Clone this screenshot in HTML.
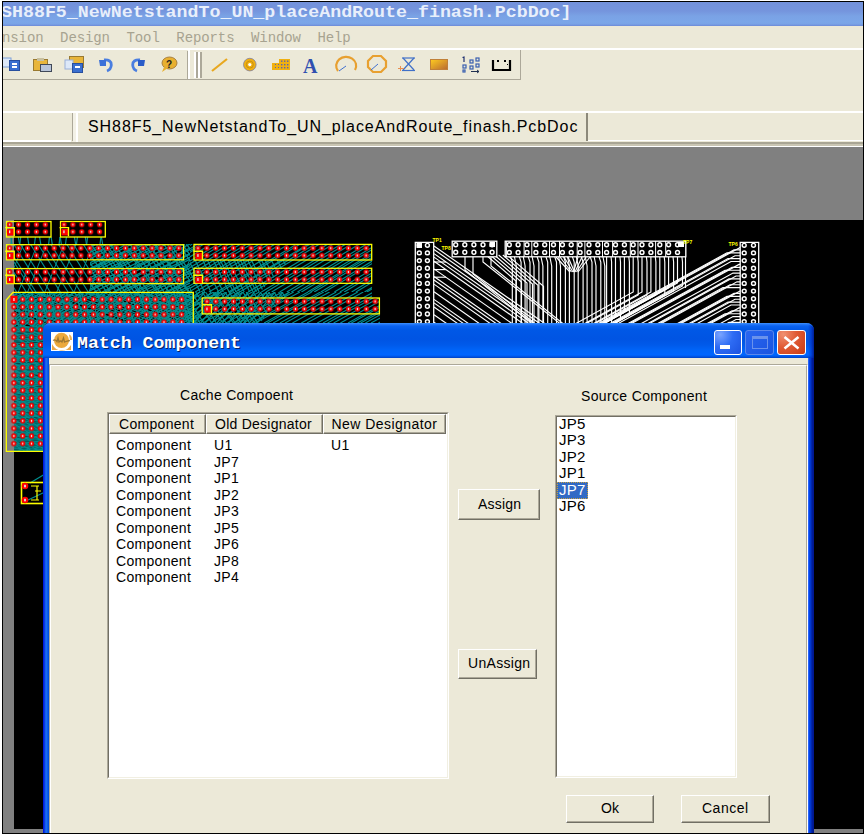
<!DOCTYPE html>
<html><head><meta charset="utf-8">
<style>
*{margin:0;padding:0;box-sizing:border-box}
html,body{width:864px;height:835px;overflow:hidden;background:#ece9d8;font-family:"Liberation Sans",sans-serif;position:relative}
.a{position:absolute}
.txt{position:absolute;font-family:"Liberation Sans",sans-serif;font-size:14px;color:#000;white-space:pre;line-height:16px}
.btn{position:absolute;background:#ece9d8;border:1px solid;border-color:#fff #716f64 #716f64 #fff;box-shadow:inset -1px -1px 0 #aca899}
</style></head><body>
<!-- main title bar -->
<div class="a" style="left:0;top:2px;width:864px;height:24px;background:linear-gradient(#7391db 0px,#7595dd 9px,#7aa2e5 14px,#7ba6e8 20px,#7aa3e6 22px,#6c8ad7 24px)"></div>
<div class="a" style="left:1px;top:3px;font-family:'Liberation Mono',monospace;font-weight:bold;font-size:17px;letter-spacing:0;transform:scaleX(1.0755);transform-origin:0 0;color:#e8effb;white-space:pre;line-height:20px">SH88F5_NewNetstandTo_UN_placeAndRoute_finash.PcbDoc]</div>
<!-- menu -->
<div class="a" style="left:2px;top:30px;font-family:'Liberation Mono',monospace;font-size:14px;letter-spacing:-0.1px;color:#a7a390;white-space:pre;line-height:16px">nsion  Design  Tool  Reports  Window  Help</div>
<div class="a" style="left:0;top:48px;width:864px;height:2px;background:#fff"></div>
<!-- toolbars -->
<div class="a" style="left:0;top:79px;width:521px;height:1px;background:#aca899"></div>
<div class="a" style="left:520px;top:50px;width:1px;height:30px;background:#aca899"></div>
<div class="a" style="left:187px;top:51px;width:1px;height:28px;background:#aca899"></div>
<div class="a" style="left:188px;top:50px;width:2px;height:29px;background:#fff"></div>
<div class="a" style="left:194px;top:52px;width:2px;height:26px;background:#fff"></div><div class="a" style="left:196px;top:52px;width:2px;height:26px;background:#aca899"></div><div class="a" style="left:198px;top:52px;width:2px;height:26px;background:#fff"></div><div class="a" style="left:200px;top:52px;width:2px;height:26px;background:#aca899"></div>

<svg class="a" style="left:0;top:50px" width="530" height="30" viewBox="0 50 530 30">
 <!-- copy -->
 <rect x="2" y="58" width="9" height="9" fill="#dde8f8" stroke="#7da0d8" stroke-width="1"/>
 <rect x="9.5" y="60.5" width="10" height="10" fill="#3a6fd0" stroke="#284f9e"/>
 <rect x="12" y="63" width="5" height="2" fill="#fff"/><rect x="12" y="66" width="5" height="2" fill="#fff"/>
 <!-- paste -->
 <rect x="33.5" y="59.5" width="14" height="11" fill="#e8b53a" stroke="#9a7a30"/>
 <rect x="37" y="58" width="7" height="3" fill="#c8c0a0"/>
 <rect x="40.5" y="64.5" width="11" height="7" fill="#b8c4d8" stroke="#404858"/>
 <!-- paste special -->
 <rect x="69.5" y="56.5" width="14" height="11" fill="#e8b53a" stroke="#9a7a30"/>
 <rect x="65" y="60" width="8" height="9" fill="#dde8f8" stroke="#9ab0d8" stroke-width="1"/>
 <rect x="72.5" y="63.5" width="10" height="9" fill="#3a6fd0" stroke="#284f9e"/>
 <rect x="75" y="66" width="5" height="2" fill="#fff"/>
 <!-- undo -->
 <path d="M104 60 Q111.5 59.5 111.3 65 Q111 69.5 107 71" fill="none" stroke="#4a7ee0" stroke-width="2.8"/>
 <path d="M99 60 L106 60 L106 66 L100 66 Z" fill="#3a70d8"/>
 <!-- redo -->
 <path d="M140 60 Q132.5 59.5 132.7 65 Q133 69.5 137 71" fill="none" stroke="#4a7ee0" stroke-width="2.8"/>
 <path d="M145 60 L138 60 L138 66 L144 66 Z" fill="#2a5cc8"/>
 <!-- help -->
 <ellipse cx="169.5" cy="63" rx="7.5" ry="6" fill="#e8b030" stroke="#a88040"/>
 <path d="M164 67 L162 72 L168 68 Z" fill="#e8b030"/>
 <text x="166" y="67.5" font-family="Liberation Sans" font-weight="bold" font-size="10" fill="#202020">?</text>
 <!-- line -->
 <line x1="212" y1="71" x2="227" y2="59" stroke="#e8a820" stroke-width="2.2"/>
 <!-- pad -->
 <circle cx="249.8" cy="64.6" r="6.3" fill="#f0b010" stroke="#8080a0" stroke-width="0.8"/>
 <circle cx="249.8" cy="64.6" r="3.5" fill="none" stroke="#c89010" stroke-width="1"/>
 <circle cx="249.8" cy="64.6" r="1.6" fill="#fff"/>
 <!-- array -->
 <rect x="272" y="63" width="18" height="7" fill="#f0b010"/>
 <rect x="279" y="59" width="11" height="4" fill="#f0b010"/>
 <g fill="#5a64b0"><rect x="275" y="64" width="1" height="1"/><rect x="278" y="64" width="1" height="1"/><rect x="281" y="64" width="1.4" height="1.4"/><rect x="284" y="64" width="1.4" height="1.4"/><rect x="287" y="64" width="1.4" height="1.4"/>
 <rect x="275" y="67" width="1" height="1"/><rect x="278" y="67" width="1" height="1"/><rect x="281" y="67" width="1.4" height="1.4"/><rect x="284" y="67" width="1.4" height="1.4"/><rect x="287" y="67" width="1.4" height="1.4"/>
 <rect x="281" y="60.5" width="1.4" height="1.4"/><rect x="284" y="60.5" width="1.4" height="1.4"/><rect x="287" y="60.5" width="1.4" height="1.4"/></g>
 <!-- A -->
 <text x="303" y="73" font-family="Liberation Serif" font-weight="bold" font-size="20" fill="#3050b0">A</text>
 <!-- arc -->
 <path d="M338 71 A10 9 0 1 1 355 70" fill="none" stroke="#e8a030" stroke-width="2.2"/>
 <line x1="339" y1="71" x2="346" y2="66" stroke="#4070d0" stroke-width="1"/>
 <!-- circle -->
 <path d="M373 56 L381 56 L386 61 L386 67 L381 72 L373 72 L368 67 L368 61 Z" fill="none" stroke="#e8a030" stroke-width="2.2"/>
 <line x1="371" y1="70" x2="378" y2="64" stroke="#4070d0" stroke-width="1"/>
 <!-- hourglass -->
 <g stroke="#4070c8" stroke-width="1.2" fill="none"><line x1="402" y1="58" x2="415" y2="58"/><line x1="402" y1="70.5" x2="415" y2="70.5"/><line x1="403" y1="58" x2="414" y2="70"/><line x1="414" y1="58" x2="403" y2="70"/></g>
 <g stroke="#e89050" stroke-width="1"><line x1="398" y1="68.5" x2="404" y2="68.5"/><line x1="400.5" y1="66" x2="400.5" y2="71"/></g>
 <!-- rect -->
 <defs><linearGradient id="og" x1="0" y1="0" x2="1" y2="1"><stop offset="0" stop-color="#ffcc20"/><stop offset="1" stop-color="#b86a30"/></linearGradient></defs>
 <rect x="430.5" y="59.5" width="17" height="10" fill="url(#og)" stroke="#c08038"/>
 <!-- array2 -->
 <g fill="none" stroke="#3a5fb0" stroke-width="1.2"><rect x="470" y="60" width="3" height="3"/><rect x="476" y="58" width="3" height="3"/><rect x="476" y="64" width="3" height="3"/><rect x="463" y="65" width="3" height="3"/><rect x="470" y="66" width="3" height="3"/><rect x="463" y="70" width="2" height="2"/></g>
 <path d="M462.5 57.5 L464 57 L464 62" stroke="#203070" stroke-width="1.2" fill="none"/>
 <path d="M471 71.5 L479 71.5 M477 70 L479 71.5 L477 73" stroke="#203050" stroke-width="1" fill="none"/>
 <!-- bracket -->
 <path d="M493 60 L493 70 L510 70 L510 60" fill="none" stroke="#000" stroke-width="2.2"/>
 <rect x="497" y="60" width="2" height="2" fill="#000"/><rect x="504" y="60" width="2" height="2" fill="#000"/><rect x="507" y="64" width="1" height="1" fill="#000"/>
</svg>
<!-- tab row -->
<div class="a" style="left:0;top:111px;width:864px;height:2px;background:#fff"></div>
<div class="a" style="left:0;top:140px;width:71px;height:2px;background:#fff"></div>
<div class="a" style="left:72px;top:113px;width:1px;height:28px;background:#aca899"></div>
<div class="a" style="left:73px;top:113px;width:3px;height:29px;background:#f3f1e6"></div><div class="a" style="left:76px;top:113px;width:2px;height:29px;background:#fff"></div>
<div class="a" style="left:586px;top:113px;width:2px;height:28px;background:#8c897a"></div>
<div class="a" style="left:588px;top:140px;width:276px;height:1px;background:#fff"></div>
<div class="txt" style="left:88px;top:118px;font-size:16px;line-height:18px;letter-spacing:0.93px">SH88F5_NewNetstandTo_UN_placeAndRoute_finash.PcbDoc</div>
<div class="a" style="left:0;top:142px;width:864px;height:4px;background:linear-gradient(#a9a594 0,#a9a594 2px,#c9c5b3 2px)"></div>
<div class="a" style="left:0;top:146px;width:864px;height:1px;background:#fff"></div>
<!-- gray work area -->
<div class="a" style="left:0;top:147px;width:864px;height:688px;background:#808080"></div>
<div class="a" style="left:14px;top:220px;width:850px;height:609px;background:#000"></div>

<svg class="a" style="left:0;top:0" width="864" height="835" viewBox="0 0 864 835">
<defs></defs>
<clipPath id="t1"><polygon points="8,237 110,237 110,245 8,245"/></clipPath>
<g clip-path="url(#t1)" stroke="#009090" stroke-width="1.2" fill="none" opacity="1">
<line x1="2.5" y1="245.0" x2="1.1" y2="237.0"/>
<line x1="12.1" y1="245.0" x2="10.8" y2="237.0"/>
<line x1="19.7" y1="245.0" x2="18.3" y2="237.0"/>
<line x1="28.9" y1="245.0" x2="27.6" y2="237.0"/>
<line x1="40.9" y1="245.0" x2="39.6" y2="237.0"/>
<line x1="52.4" y1="245.0" x2="51.1" y2="237.0"/>
<line x1="61.5" y1="245.0" x2="60.2" y2="237.0"/>
<line x1="75.8" y1="245.0" x2="74.4" y2="237.0"/>
<line x1="86.6" y1="245.0" x2="85.3" y2="237.0"/>
<line x1="102.8" y1="245.0" x2="101.4" y2="237.0"/>
<line x1="115.0" y1="245.0" x2="113.6" y2="237.0"/>
<line x1="3.1" y1="245.0" x2="4.1" y2="237.0"/>
<line x1="10.9" y1="245.0" x2="11.9" y2="237.0"/>
<line x1="19.7" y1="245.0" x2="20.7" y2="237.0"/>
<line x1="34.4" y1="245.0" x2="35.4" y2="237.0"/>
<line x1="48.5" y1="245.0" x2="49.5" y2="237.0"/>
<line x1="59.0" y1="245.0" x2="60.0" y2="237.0"/>
<line x1="65.4" y1="245.0" x2="66.4" y2="237.0"/>
<line x1="76.4" y1="245.0" x2="77.4" y2="237.0"/>
<line x1="86.6" y1="245.0" x2="87.6" y2="237.0"/>
<line x1="99.9" y1="245.0" x2="100.9" y2="237.0"/>
<line x1="111.0" y1="245.0" x2="112.0" y2="237.0"/>
</g>
<clipPath id="t2"><polygon points="14,244 90,244 90,292 14,292"/></clipPath>
<g clip-path="url(#t2)" stroke="#009090" stroke-width="1.1" fill="none" opacity="1">
<line x1="8.2" y1="292.0" x2="-21.8" y2="244.0"/>
<line x1="16.5" y1="292.0" x2="-13.5" y2="244.0"/>
<line x1="26.2" y1="292.0" x2="-3.8" y2="244.0"/>
<line x1="32.8" y1="292.0" x2="2.8" y2="244.0"/>
<line x1="35.9" y1="292.0" x2="5.9" y2="244.0"/>
<line x1="43.6" y1="292.0" x2="13.6" y2="244.0"/>
<line x1="50.2" y1="292.0" x2="20.2" y2="244.0"/>
<line x1="60.3" y1="292.0" x2="30.3" y2="244.0"/>
<line x1="68.0" y1="292.0" x2="38.0" y2="244.0"/>
<line x1="73.5" y1="292.0" x2="43.5" y2="244.0"/>
<line x1="80.6" y1="292.0" x2="50.6" y2="244.0"/>
<line x1="88.2" y1="292.0" x2="58.2" y2="244.0"/>
<line x1="96.6" y1="292.0" x2="66.6" y2="244.0"/>
<line x1="103.3" y1="292.0" x2="73.3" y2="244.0"/>
<line x1="113.1" y1="292.0" x2="83.1" y2="244.0"/>
<line x1="123.4" y1="292.0" x2="93.4" y2="244.0"/>
</g>
<clipPath id="t2c"><polygon points="14,244 190,244 190,292 14,292"/></clipPath>
<g clip-path="url(#t2c)" stroke="#009090" stroke-width="1" fill="none" opacity="1">
<line x1="-10.5" y1="292.0" x2="8.7" y2="244.0"/>
<line x1="4.3" y1="292.0" x2="23.5" y2="244.0"/>
<line x1="18.3" y1="292.0" x2="37.5" y2="244.0"/>
<line x1="27.6" y1="292.0" x2="46.8" y2="244.0"/>
<line x1="44.9" y1="292.0" x2="64.1" y2="244.0"/>
<line x1="56.8" y1="292.0" x2="76.0" y2="244.0"/>
<line x1="74.1" y1="292.0" x2="93.3" y2="244.0"/>
<line x1="88.9" y1="292.0" x2="108.1" y2="244.0"/>
<line x1="108.0" y1="292.0" x2="127.2" y2="244.0"/>
<line x1="124.4" y1="292.0" x2="143.6" y2="244.0"/>
<line x1="137.7" y1="292.0" x2="156.9" y2="244.0"/>
<line x1="157.8" y1="292.0" x2="177.0" y2="244.0"/>
<line x1="165.6" y1="292.0" x2="184.8" y2="244.0"/>
<line x1="176.8" y1="292.0" x2="196.0" y2="244.0"/>
<line x1="191.7" y1="292.0" x2="210.9" y2="244.0"/>
</g>
<clipPath id="t2d"><polygon points="90,244 190,244 190,292 90,292"/></clipPath>
<g clip-path="url(#t2d)" stroke="#009090" stroke-width="1.3" fill="none" opacity="1">
<line x1="83.5" y1="292.0" x2="49.2" y2="244.0"/>
<line x1="89.3" y1="292.0" x2="55.0" y2="244.0"/>
<line x1="96.3" y1="292.0" x2="62.0" y2="244.0"/>
<line x1="100.7" y1="292.0" x2="66.5" y2="244.0"/>
<line x1="106.7" y1="292.0" x2="72.4" y2="244.0"/>
<line x1="110.6" y1="292.0" x2="76.3" y2="244.0"/>
<line x1="116.6" y1="292.0" x2="82.3" y2="244.0"/>
<line x1="121.4" y1="292.0" x2="87.1" y2="244.0"/>
<line x1="125.1" y1="292.0" x2="90.8" y2="244.0"/>
<line x1="130.5" y1="292.0" x2="96.2" y2="244.0"/>
<line x1="134.2" y1="292.0" x2="99.9" y2="244.0"/>
<line x1="138.3" y1="292.0" x2="104.0" y2="244.0"/>
<line x1="140.5" y1="292.0" x2="106.2" y2="244.0"/>
<line x1="144.4" y1="292.0" x2="110.1" y2="244.0"/>
<line x1="148.6" y1="292.0" x2="114.3" y2="244.0"/>
<line x1="156.9" y1="292.0" x2="122.6" y2="244.0"/>
<line x1="159.4" y1="292.0" x2="125.1" y2="244.0"/>
<line x1="164.1" y1="292.0" x2="129.8" y2="244.0"/>
<line x1="169.0" y1="292.0" x2="134.8" y2="244.0"/>
<line x1="174.9" y1="292.0" x2="140.6" y2="244.0"/>
<line x1="178.7" y1="292.0" x2="144.4" y2="244.0"/>
<line x1="182.8" y1="292.0" x2="148.6" y2="244.0"/>
<line x1="188.4" y1="292.0" x2="154.1" y2="244.0"/>
<line x1="189.6" y1="292.0" x2="155.3" y2="244.0"/>
<line x1="197.9" y1="292.0" x2="163.6" y2="244.0"/>
<line x1="201.5" y1="292.0" x2="167.3" y2="244.0"/>
<line x1="204.6" y1="292.0" x2="170.3" y2="244.0"/>
<line x1="212.5" y1="292.0" x2="178.2" y2="244.0"/>
<line x1="216.5" y1="292.0" x2="182.2" y2="244.0"/>
<line x1="220.7" y1="292.0" x2="186.4" y2="244.0"/>
<line x1="227.9" y1="292.0" x2="193.6" y2="244.0"/>
<line x1="-11.5" y1="292.0" x2="84.5" y2="244.0"/>
<line x1="-6.2" y1="292.0" x2="89.8" y2="244.0"/>
<line x1="0.9" y1="292.0" x2="96.9" y2="244.0"/>
<line x1="7.0" y1="292.0" x2="103.0" y2="244.0"/>
<line x1="11.2" y1="292.0" x2="107.2" y2="244.0"/>
<line x1="16.7" y1="292.0" x2="112.7" y2="244.0"/>
<line x1="18.8" y1="292.0" x2="114.8" y2="244.0"/>
<line x1="23.6" y1="292.0" x2="119.6" y2="244.0"/>
<line x1="31.5" y1="292.0" x2="127.5" y2="244.0"/>
<line x1="36.2" y1="292.0" x2="132.2" y2="244.0"/>
<line x1="43.2" y1="292.0" x2="139.2" y2="244.0"/>
<line x1="45.5" y1="292.0" x2="141.5" y2="244.0"/>
<line x1="49.3" y1="292.0" x2="145.3" y2="244.0"/>
<line x1="54.4" y1="292.0" x2="150.4" y2="244.0"/>
<line x1="61.6" y1="292.0" x2="157.6" y2="244.0"/>
<line x1="66.0" y1="292.0" x2="162.0" y2="244.0"/>
<line x1="70.5" y1="292.0" x2="166.5" y2="244.0"/>
<line x1="78.6" y1="292.0" x2="174.6" y2="244.0"/>
<line x1="84.3" y1="292.0" x2="180.3" y2="244.0"/>
<line x1="87.5" y1="292.0" x2="183.5" y2="244.0"/>
<line x1="94.1" y1="292.0" x2="190.1" y2="244.0"/>
<line x1="102.2" y1="292.0" x2="198.2" y2="244.0"/>
<line x1="105.1" y1="292.0" x2="201.1" y2="244.0"/>
<line x1="112.8" y1="292.0" x2="208.8" y2="244.0"/>
<line x1="114.7" y1="292.0" x2="210.7" y2="244.0"/>
<line x1="120.6" y1="292.0" x2="216.6" y2="244.0"/>
<line x1="124.6" y1="292.0" x2="220.6" y2="244.0"/>
<line x1="133.4" y1="292.0" x2="229.4" y2="244.0"/>
<line x1="137.1" y1="292.0" x2="233.1" y2="244.0"/>
<line x1="141.7" y1="292.0" x2="237.7" y2="244.0"/>
<line x1="147.3" y1="292.0" x2="243.3" y2="244.0"/>
<line x1="151.5" y1="292.0" x2="247.5" y2="244.0"/>
<line x1="158.0" y1="292.0" x2="254.0" y2="244.0"/>
<line x1="165.6" y1="292.0" x2="261.6" y2="244.0"/>
<line x1="167.8" y1="292.0" x2="263.8" y2="244.0"/>
<line x1="171.9" y1="292.0" x2="267.9" y2="244.0"/>
<line x1="177.3" y1="292.0" x2="273.3" y2="244.0"/>
<line x1="181.6" y1="292.0" x2="277.6" y2="244.0"/>
<line x1="188.9" y1="292.0" x2="284.9" y2="244.0"/>
<line x1="194.4" y1="292.0" x2="290.4" y2="244.0"/>
</g>
<clipPath id="t2b"><polygon points="190,244 372,244 372,292 190,292"/></clipPath>
<g clip-path="url(#t2b)" stroke="#009090" stroke-width="1.15" fill="none" opacity="1">
<line x1="104.8" y1="292.0" x2="184.8" y2="244.0"/>
<line x1="112.3" y1="292.0" x2="192.3" y2="244.0"/>
<line x1="118.0" y1="292.0" x2="198.0" y2="244.0"/>
<line x1="121.2" y1="292.0" x2="201.2" y2="244.0"/>
<line x1="124.0" y1="292.0" x2="204.0" y2="244.0"/>
<line x1="131.3" y1="292.0" x2="211.3" y2="244.0"/>
<line x1="138.3" y1="292.0" x2="218.3" y2="244.0"/>
<line x1="142.9" y1="292.0" x2="222.9" y2="244.0"/>
<line x1="149.2" y1="292.0" x2="229.2" y2="244.0"/>
<line x1="154.6" y1="292.0" x2="234.6" y2="244.0"/>
<line x1="160.8" y1="292.0" x2="240.8" y2="244.0"/>
<line x1="166.8" y1="292.0" x2="246.8" y2="244.0"/>
<line x1="171.7" y1="292.0" x2="251.7" y2="244.0"/>
<line x1="179.4" y1="292.0" x2="259.4" y2="244.0"/>
<line x1="183.8" y1="292.0" x2="263.8" y2="244.0"/>
<line x1="189.0" y1="292.0" x2="269.0" y2="244.0"/>
<line x1="195.2" y1="292.0" x2="275.2" y2="244.0"/>
<line x1="200.9" y1="292.0" x2="280.9" y2="244.0"/>
<line x1="209.0" y1="292.0" x2="289.0" y2="244.0"/>
<line x1="216.9" y1="292.0" x2="296.9" y2="244.0"/>
<line x1="220.2" y1="292.0" x2="300.2" y2="244.0"/>
<line x1="228.5" y1="292.0" x2="308.5" y2="244.0"/>
<line x1="230.2" y1="292.0" x2="310.2" y2="244.0"/>
<line x1="235.3" y1="292.0" x2="315.3" y2="244.0"/>
<line x1="239.7" y1="292.0" x2="319.7" y2="244.0"/>
<line x1="248.1" y1="292.0" x2="328.1" y2="244.0"/>
<line x1="253.4" y1="292.0" x2="333.4" y2="244.0"/>
<line x1="261.4" y1="292.0" x2="341.4" y2="244.0"/>
<line x1="266.0" y1="292.0" x2="346.0" y2="244.0"/>
<line x1="271.6" y1="292.0" x2="351.6" y2="244.0"/>
<line x1="279.6" y1="292.0" x2="359.6" y2="244.0"/>
<line x1="286.8" y1="292.0" x2="366.8" y2="244.0"/>
<line x1="291.3" y1="292.0" x2="371.3" y2="244.0"/>
<line x1="297.5" y1="292.0" x2="377.5" y2="244.0"/>
<line x1="301.4" y1="292.0" x2="381.4" y2="244.0"/>
<line x1="307.7" y1="292.0" x2="387.7" y2="244.0"/>
<line x1="310.5" y1="292.0" x2="390.5" y2="244.0"/>
<line x1="314.2" y1="292.0" x2="394.2" y2="244.0"/>
<line x1="320.8" y1="292.0" x2="400.8" y2="244.0"/>
<line x1="324.6" y1="292.0" x2="404.6" y2="244.0"/>
<line x1="334.4" y1="292.0" x2="414.4" y2="244.0"/>
<line x1="340.0" y1="292.0" x2="420.0" y2="244.0"/>
<line x1="344.2" y1="292.0" x2="424.2" y2="244.0"/>
<line x1="351.6" y1="292.0" x2="431.6" y2="244.0"/>
<line x1="356.0" y1="292.0" x2="436.0" y2="244.0"/>
<line x1="364.5" y1="292.0" x2="444.5" y2="244.0"/>
<line x1="366.9" y1="292.0" x2="446.9" y2="244.0"/>
<line x1="375.5" y1="292.0" x2="455.5" y2="244.0"/>
</g>
<clipPath id="t2e"><polygon points="190,260 290,260 260,292 190,292"/></clipPath>
<g clip-path="url(#t2e)" stroke="#009090" stroke-width="1.2" fill="none" opacity="1">
<line x1="183.8" y1="292.0" x2="167.8" y2="260.0"/>
<line x1="188.8" y1="292.0" x2="172.8" y2="260.0"/>
<line x1="191.6" y1="292.0" x2="175.6" y2="260.0"/>
<line x1="200.1" y1="292.0" x2="184.1" y2="260.0"/>
<line x1="204.6" y1="292.0" x2="188.6" y2="260.0"/>
<line x1="211.0" y1="292.0" x2="195.0" y2="260.0"/>
<line x1="218.6" y1="292.0" x2="202.6" y2="260.0"/>
<line x1="223.3" y1="292.0" x2="207.3" y2="260.0"/>
<line x1="229.1" y1="292.0" x2="213.1" y2="260.0"/>
<line x1="233.4" y1="292.0" x2="217.4" y2="260.0"/>
<line x1="236.1" y1="292.0" x2="220.1" y2="260.0"/>
<line x1="239.6" y1="292.0" x2="223.6" y2="260.0"/>
<line x1="244.2" y1="292.0" x2="228.2" y2="260.0"/>
<line x1="249.8" y1="292.0" x2="233.8" y2="260.0"/>
<line x1="253.1" y1="292.0" x2="237.1" y2="260.0"/>
<line x1="256.4" y1="292.0" x2="240.4" y2="260.0"/>
<line x1="259.2" y1="292.0" x2="243.2" y2="260.0"/>
<line x1="263.7" y1="292.0" x2="247.7" y2="260.0"/>
<line x1="267.3" y1="292.0" x2="251.3" y2="260.0"/>
<line x1="274.4" y1="292.0" x2="258.4" y2="260.0"/>
<line x1="277.5" y1="292.0" x2="261.5" y2="260.0"/>
<line x1="281.2" y1="292.0" x2="265.2" y2="260.0"/>
<line x1="287.3" y1="292.0" x2="271.3" y2="260.0"/>
<line x1="293.2" y1="292.0" x2="277.2" y2="260.0"/>
<line x1="299.1" y1="292.0" x2="283.1" y2="260.0"/>
<line x1="306.5" y1="292.0" x2="290.5" y2="260.0"/>
</g>
<clipPath id="t3"><polygon points="14,292 194,292 194,326 14,326"/></clipPath>
<g clip-path="url(#t3)" stroke="#009090" stroke-width="1.2" fill="none" opacity="1">
<line x1="8.7" y1="326.0" x2="-88.4" y2="292.0"/>
<line x1="12.1" y1="326.0" x2="-85.1" y2="292.0"/>
<line x1="15.6" y1="326.0" x2="-81.5" y2="292.0"/>
<line x1="22.1" y1="326.0" x2="-75.0" y2="292.0"/>
<line x1="25.3" y1="326.0" x2="-71.9" y2="292.0"/>
<line x1="34.0" y1="326.0" x2="-63.1" y2="292.0"/>
<line x1="37.9" y1="326.0" x2="-59.2" y2="292.0"/>
<line x1="41.9" y1="326.0" x2="-55.2" y2="292.0"/>
<line x1="46.4" y1="326.0" x2="-50.8" y2="292.0"/>
<line x1="51.5" y1="326.0" x2="-45.7" y2="292.0"/>
<line x1="60.4" y1="326.0" x2="-36.7" y2="292.0"/>
<line x1="63.4" y1="326.0" x2="-33.7" y2="292.0"/>
<line x1="70.5" y1="326.0" x2="-26.7" y2="292.0"/>
<line x1="74.0" y1="326.0" x2="-23.2" y2="292.0"/>
<line x1="79.9" y1="326.0" x2="-17.2" y2="292.0"/>
<line x1="84.1" y1="326.0" x2="-13.0" y2="292.0"/>
<line x1="88.6" y1="326.0" x2="-8.6" y2="292.0"/>
<line x1="92.9" y1="326.0" x2="-4.3" y2="292.0"/>
<line x1="97.3" y1="326.0" x2="0.2" y2="292.0"/>
<line x1="101.2" y1="326.0" x2="4.1" y2="292.0"/>
<line x1="106.0" y1="326.0" x2="8.8" y2="292.0"/>
<line x1="111.6" y1="326.0" x2="14.4" y2="292.0"/>
<line x1="117.1" y1="326.0" x2="20.0" y2="292.0"/>
<line x1="122.7" y1="326.0" x2="25.5" y2="292.0"/>
<line x1="128.7" y1="326.0" x2="31.6" y2="292.0"/>
<line x1="131.6" y1="326.0" x2="34.4" y2="292.0"/>
<line x1="135.1" y1="326.0" x2="37.9" y2="292.0"/>
<line x1="144.0" y1="326.0" x2="46.8" y2="292.0"/>
<line x1="149.0" y1="326.0" x2="51.9" y2="292.0"/>
<line x1="153.5" y1="326.0" x2="56.3" y2="292.0"/>
<line x1="159.7" y1="326.0" x2="62.5" y2="292.0"/>
<line x1="166.9" y1="326.0" x2="69.8" y2="292.0"/>
<line x1="172.6" y1="326.0" x2="75.4" y2="292.0"/>
<line x1="179.4" y1="326.0" x2="82.3" y2="292.0"/>
<line x1="183.8" y1="326.0" x2="86.7" y2="292.0"/>
<line x1="186.7" y1="326.0" x2="89.5" y2="292.0"/>
<line x1="191.0" y1="326.0" x2="93.9" y2="292.0"/>
<line x1="198.7" y1="326.0" x2="101.6" y2="292.0"/>
<line x1="204.4" y1="326.0" x2="107.3" y2="292.0"/>
<line x1="209.8" y1="326.0" x2="112.6" y2="292.0"/>
<line x1="213.7" y1="326.0" x2="116.6" y2="292.0"/>
<line x1="218.8" y1="326.0" x2="121.7" y2="292.0"/>
<line x1="224.4" y1="326.0" x2="127.3" y2="292.0"/>
<line x1="227.9" y1="326.0" x2="130.8" y2="292.0"/>
<line x1="229.9" y1="326.0" x2="132.8" y2="292.0"/>
<line x1="236.0" y1="326.0" x2="138.8" y2="292.0"/>
<line x1="239.8" y1="326.0" x2="142.7" y2="292.0"/>
<line x1="246.0" y1="326.0" x2="148.8" y2="292.0"/>
<line x1="250.5" y1="326.0" x2="153.3" y2="292.0"/>
<line x1="257.1" y1="326.0" x2="159.9" y2="292.0"/>
<line x1="262.2" y1="326.0" x2="165.0" y2="292.0"/>
<line x1="264.0" y1="326.0" x2="166.8" y2="292.0"/>
<line x1="269.8" y1="326.0" x2="172.6" y2="292.0"/>
<line x1="273.5" y1="326.0" x2="176.3" y2="292.0"/>
<line x1="275.0" y1="326.0" x2="177.9" y2="292.0"/>
<line x1="280.9" y1="326.0" x2="183.8" y2="292.0"/>
<line x1="286.7" y1="326.0" x2="189.5" y2="292.0"/>
<line x1="290.4" y1="326.0" x2="193.2" y2="292.0"/>
<line x1="295.1" y1="326.0" x2="197.9" y2="292.0"/>
<line x1="-32.3" y1="326.0" x2="10.2" y2="292.0"/>
<line x1="-28.3" y1="326.0" x2="14.2" y2="292.0"/>
<line x1="-24.4" y1="326.0" x2="18.1" y2="292.0"/>
<line x1="-17.2" y1="326.0" x2="25.3" y2="292.0"/>
<line x1="-11.4" y1="326.0" x2="31.1" y2="292.0"/>
<line x1="-8.0" y1="326.0" x2="34.5" y2="292.0"/>
<line x1="-1.3" y1="326.0" x2="41.2" y2="292.0"/>
<line x1="3.9" y1="326.0" x2="46.4" y2="292.0"/>
<line x1="11.4" y1="326.0" x2="53.9" y2="292.0"/>
<line x1="14.5" y1="326.0" x2="57.0" y2="292.0"/>
<line x1="19.8" y1="326.0" x2="62.3" y2="292.0"/>
<line x1="23.6" y1="326.0" x2="66.1" y2="292.0"/>
<line x1="31.0" y1="326.0" x2="73.5" y2="292.0"/>
<line x1="32.6" y1="326.0" x2="75.1" y2="292.0"/>
<line x1="38.9" y1="326.0" x2="81.4" y2="292.0"/>
<line x1="42.2" y1="326.0" x2="84.7" y2="292.0"/>
<line x1="47.1" y1="326.0" x2="89.6" y2="292.0"/>
<line x1="52.5" y1="326.0" x2="95.0" y2="292.0"/>
<line x1="61.0" y1="326.0" x2="103.5" y2="292.0"/>
<line x1="64.8" y1="326.0" x2="107.3" y2="292.0"/>
<line x1="70.5" y1="326.0" x2="113.0" y2="292.0"/>
<line x1="73.1" y1="326.0" x2="115.6" y2="292.0"/>
<line x1="79.6" y1="326.0" x2="122.1" y2="292.0"/>
<line x1="83.0" y1="326.0" x2="125.5" y2="292.0"/>
<line x1="87.5" y1="326.0" x2="130.0" y2="292.0"/>
<line x1="90.1" y1="326.0" x2="132.6" y2="292.0"/>
<line x1="97.0" y1="326.0" x2="139.5" y2="292.0"/>
<line x1="103.7" y1="326.0" x2="146.2" y2="292.0"/>
<line x1="108.5" y1="326.0" x2="151.0" y2="292.0"/>
<line x1="111.9" y1="326.0" x2="154.4" y2="292.0"/>
<line x1="120.2" y1="326.0" x2="162.7" y2="292.0"/>
<line x1="125.7" y1="326.0" x2="168.2" y2="292.0"/>
<line x1="133.3" y1="326.0" x2="175.8" y2="292.0"/>
<line x1="137.8" y1="326.0" x2="180.3" y2="292.0"/>
<line x1="141.1" y1="326.0" x2="183.6" y2="292.0"/>
<line x1="145.9" y1="326.0" x2="188.4" y2="292.0"/>
<line x1="150.1" y1="326.0" x2="192.6" y2="292.0"/>
<line x1="155.2" y1="326.0" x2="197.7" y2="292.0"/>
<line x1="157.4" y1="326.0" x2="199.9" y2="292.0"/>
<line x1="161.2" y1="326.0" x2="203.7" y2="292.0"/>
<line x1="169.2" y1="326.0" x2="211.7" y2="292.0"/>
<line x1="172.3" y1="326.0" x2="214.8" y2="292.0"/>
<line x1="176.2" y1="326.0" x2="218.7" y2="292.0"/>
<line x1="179.6" y1="326.0" x2="222.1" y2="292.0"/>
<line x1="183.4" y1="326.0" x2="225.9" y2="292.0"/>
<line x1="190.9" y1="326.0" x2="233.4" y2="292.0"/>
<line x1="196.0" y1="326.0" x2="238.5" y2="292.0"/>
<line x1="8.8" y1="326.0" x2="-2.5" y2="292.0"/>
<line x1="11.6" y1="326.0" x2="0.3" y2="292.0"/>
<line x1="15.4" y1="326.0" x2="4.1" y2="292.0"/>
<line x1="18.5" y1="326.0" x2="7.2" y2="292.0"/>
<line x1="23.5" y1="326.0" x2="12.2" y2="292.0"/>
<line x1="30.6" y1="326.0" x2="19.3" y2="292.0"/>
<line x1="34.3" y1="326.0" x2="22.9" y2="292.0"/>
<line x1="39.2" y1="326.0" x2="27.9" y2="292.0"/>
<line x1="42.7" y1="326.0" x2="31.3" y2="292.0"/>
<line x1="49.5" y1="326.0" x2="38.1" y2="292.0"/>
<line x1="51.6" y1="326.0" x2="40.3" y2="292.0"/>
<line x1="58.2" y1="326.0" x2="46.9" y2="292.0"/>
<line x1="60.3" y1="326.0" x2="48.9" y2="292.0"/>
<line x1="64.7" y1="326.0" x2="53.3" y2="292.0"/>
<line x1="71.1" y1="326.0" x2="59.8" y2="292.0"/>
<line x1="77.3" y1="326.0" x2="65.9" y2="292.0"/>
<line x1="77.8" y1="326.0" x2="66.5" y2="292.0"/>
<line x1="86.2" y1="326.0" x2="74.9" y2="292.0"/>
<line x1="90.2" y1="326.0" x2="78.9" y2="292.0"/>
<line x1="92.6" y1="326.0" x2="81.3" y2="292.0"/>
<line x1="100.6" y1="326.0" x2="89.3" y2="292.0"/>
<line x1="107.5" y1="326.0" x2="96.2" y2="292.0"/>
<line x1="108.9" y1="326.0" x2="97.6" y2="292.0"/>
<line x1="113.8" y1="326.0" x2="102.4" y2="292.0"/>
<line x1="120.7" y1="326.0" x2="109.4" y2="292.0"/>
<line x1="125.8" y1="326.0" x2="114.4" y2="292.0"/>
<line x1="131.2" y1="326.0" x2="119.9" y2="292.0"/>
<line x1="135.2" y1="326.0" x2="123.9" y2="292.0"/>
<line x1="141.9" y1="326.0" x2="130.6" y2="292.0"/>
<line x1="149.8" y1="326.0" x2="138.5" y2="292.0"/>
<line x1="152.5" y1="326.0" x2="141.2" y2="292.0"/>
<line x1="158.0" y1="326.0" x2="146.7" y2="292.0"/>
<line x1="162.2" y1="326.0" x2="150.9" y2="292.0"/>
<line x1="166.8" y1="326.0" x2="155.4" y2="292.0"/>
<line x1="171.7" y1="326.0" x2="160.3" y2="292.0"/>
<line x1="176.2" y1="326.0" x2="164.9" y2="292.0"/>
<line x1="178.4" y1="326.0" x2="167.0" y2="292.0"/>
<line x1="185.2" y1="326.0" x2="173.8" y2="292.0"/>
<line x1="190.5" y1="326.0" x2="179.2" y2="292.0"/>
<line x1="193.5" y1="326.0" x2="182.1" y2="292.0"/>
<line x1="199.6" y1="326.0" x2="188.3" y2="292.0"/>
<line x1="203.5" y1="326.0" x2="192.2" y2="292.0"/>
<line x1="207.2" y1="326.0" x2="195.8" y2="292.0"/>
</g>
<clipPath id="t3b"><polygon points="14,326 194,326 194,452 14,452"/></clipPath>
<g clip-path="url(#t3b)" stroke="#009090" stroke-width="1" fill="none" opacity="1">
<line x1="-1041.2" y1="452.0" x2="8.8" y2="326.0"/>
<line x1="-1034.5" y1="452.0" x2="15.5" y2="326.0"/>
<line x1="-1025.7" y1="452.0" x2="24.3" y2="326.0"/>
<line x1="-1020.7" y1="452.0" x2="29.3" y2="326.0"/>
<line x1="-1012.6" y1="452.0" x2="37.4" y2="326.0"/>
<line x1="-1006.6" y1="452.0" x2="43.4" y2="326.0"/>
<line x1="-998.5" y1="452.0" x2="51.5" y2="326.0"/>
<line x1="-991.4" y1="452.0" x2="58.6" y2="326.0"/>
<line x1="-985.5" y1="452.0" x2="64.5" y2="326.0"/>
<line x1="-981.4" y1="452.0" x2="68.6" y2="326.0"/>
<line x1="-972.1" y1="452.0" x2="77.9" y2="326.0"/>
<line x1="-961.3" y1="452.0" x2="88.7" y2="326.0"/>
<line x1="-956.5" y1="452.0" x2="93.5" y2="326.0"/>
<line x1="-948.2" y1="452.0" x2="101.8" y2="326.0"/>
<line x1="-939.5" y1="452.0" x2="110.5" y2="326.0"/>
<line x1="-932.5" y1="452.0" x2="117.5" y2="326.0"/>
<line x1="-922.3" y1="452.0" x2="127.7" y2="326.0"/>
<line x1="-917.8" y1="452.0" x2="132.2" y2="326.0"/>
<line x1="-908.4" y1="452.0" x2="141.6" y2="326.0"/>
<line x1="-899.1" y1="452.0" x2="150.9" y2="326.0"/>
<line x1="-888.0" y1="452.0" x2="162.0" y2="326.0"/>
<line x1="-883.8" y1="452.0" x2="166.2" y2="326.0"/>
<line x1="-872.0" y1="452.0" x2="178.0" y2="326.0"/>
<line x1="-867.5" y1="452.0" x2="182.5" y2="326.0"/>
<line x1="-861.6" y1="452.0" x2="188.4" y2="326.0"/>
<line x1="-855.8" y1="452.0" x2="194.2" y2="326.0"/>
<line x1="-850.9" y1="452.0" x2="199.1" y2="326.0"/>
<line x1="-842.3" y1="452.0" x2="207.7" y2="326.0"/>
<line x1="-837.0" y1="452.0" x2="213.0" y2="326.0"/>
<line x1="-833.1" y1="452.0" x2="216.9" y2="326.0"/>
<line x1="-822.3" y1="452.0" x2="227.7" y2="326.0"/>
<line x1="-817.5" y1="452.0" x2="232.5" y2="326.0"/>
<line x1="-809.2" y1="452.0" x2="240.8" y2="326.0"/>
<line x1="-799.7" y1="452.0" x2="250.3" y2="326.0"/>
<line x1="-790.9" y1="452.0" x2="259.1" y2="326.0"/>
<line x1="-787.7" y1="452.0" x2="262.3" y2="326.0"/>
<line x1="-777.2" y1="452.0" x2="272.8" y2="326.0"/>
<line x1="-774.7" y1="452.0" x2="275.3" y2="326.0"/>
<line x1="-767.2" y1="452.0" x2="282.8" y2="326.0"/>
<line x1="-761.6" y1="452.0" x2="288.4" y2="326.0"/>
<line x1="-753.0" y1="452.0" x2="297.0" y2="326.0"/>
<line x1="-745.0" y1="452.0" x2="305.0" y2="326.0"/>
<line x1="-738.9" y1="452.0" x2="311.1" y2="326.0"/>
<line x1="-729.9" y1="452.0" x2="320.1" y2="326.0"/>
<line x1="-724.7" y1="452.0" x2="325.3" y2="326.0"/>
<line x1="-712.9" y1="452.0" x2="337.1" y2="326.0"/>
<line x1="-704.5" y1="452.0" x2="345.5" y2="326.0"/>
<line x1="-702.0" y1="452.0" x2="348.0" y2="326.0"/>
<line x1="-692.5" y1="452.0" x2="357.5" y2="326.0"/>
<line x1="-684.0" y1="452.0" x2="366.0" y2="326.0"/>
<line x1="-677.8" y1="452.0" x2="372.2" y2="326.0"/>
<line x1="-668.9" y1="452.0" x2="381.1" y2="326.0"/>
<line x1="-663.7" y1="452.0" x2="386.3" y2="326.0"/>
<line x1="-654.7" y1="452.0" x2="395.3" y2="326.0"/>
<line x1="-646.2" y1="452.0" x2="403.8" y2="326.0"/>
<line x1="-640.6" y1="452.0" x2="409.4" y2="326.0"/>
<line x1="-632.5" y1="452.0" x2="417.5" y2="326.0"/>
<line x1="-629.3" y1="452.0" x2="420.7" y2="326.0"/>
<line x1="-620.1" y1="452.0" x2="429.9" y2="326.0"/>
<line x1="-615.9" y1="452.0" x2="434.1" y2="326.0"/>
<line x1="-607.2" y1="452.0" x2="442.8" y2="326.0"/>
<line x1="-595.1" y1="452.0" x2="454.9" y2="326.0"/>
<line x1="-586.6" y1="452.0" x2="463.4" y2="326.0"/>
<line x1="-582.1" y1="452.0" x2="467.9" y2="326.0"/>
<line x1="-572.7" y1="452.0" x2="477.3" y2="326.0"/>
<line x1="-567.0" y1="452.0" x2="483.0" y2="326.0"/>
<line x1="-558.8" y1="452.0" x2="491.2" y2="326.0"/>
<line x1="-549.9" y1="452.0" x2="500.1" y2="326.0"/>
<line x1="-540.6" y1="452.0" x2="509.4" y2="326.0"/>
<line x1="-534.8" y1="452.0" x2="515.2" y2="326.0"/>
<line x1="-529.4" y1="452.0" x2="520.6" y2="326.0"/>
<line x1="-522.1" y1="452.0" x2="527.9" y2="326.0"/>
<line x1="-517.9" y1="452.0" x2="532.1" y2="326.0"/>
<line x1="-512.2" y1="452.0" x2="537.8" y2="326.0"/>
<line x1="-501.1" y1="452.0" x2="548.9" y2="326.0"/>
<line x1="-495.2" y1="452.0" x2="554.8" y2="326.0"/>
<line x1="-484.4" y1="452.0" x2="565.6" y2="326.0"/>
<line x1="-477.6" y1="452.0" x2="572.4" y2="326.0"/>
<line x1="-468.7" y1="452.0" x2="581.3" y2="326.0"/>
<line x1="-465.1" y1="452.0" x2="584.9" y2="326.0"/>
<line x1="-454.6" y1="452.0" x2="595.4" y2="326.0"/>
<line x1="-447.0" y1="452.0" x2="603.0" y2="326.0"/>
<line x1="-440.5" y1="452.0" x2="609.5" y2="326.0"/>
<line x1="-432.3" y1="452.0" x2="617.7" y2="326.0"/>
<line x1="-424.4" y1="452.0" x2="625.6" y2="326.0"/>
<line x1="-417.9" y1="452.0" x2="632.1" y2="326.0"/>
<line x1="-412.5" y1="452.0" x2="637.5" y2="326.0"/>
<line x1="-401.3" y1="452.0" x2="648.7" y2="326.0"/>
<line x1="-397.2" y1="452.0" x2="652.8" y2="326.0"/>
<line x1="-390.1" y1="452.0" x2="659.9" y2="326.0"/>
<line x1="-383.6" y1="452.0" x2="666.4" y2="326.0"/>
<line x1="-377.6" y1="452.0" x2="672.4" y2="326.0"/>
<line x1="-368.3" y1="452.0" x2="681.7" y2="326.0"/>
<line x1="-364.5" y1="452.0" x2="685.5" y2="326.0"/>
<line x1="-356.0" y1="452.0" x2="694.0" y2="326.0"/>
<line x1="-351.5" y1="452.0" x2="698.5" y2="326.0"/>
<line x1="-344.3" y1="452.0" x2="705.7" y2="326.0"/>
<line x1="-338.7" y1="452.0" x2="711.3" y2="326.0"/>
<line x1="-332.6" y1="452.0" x2="717.4" y2="326.0"/>
<line x1="-324.1" y1="452.0" x2="725.9" y2="326.0"/>
<line x1="-320.5" y1="452.0" x2="729.5" y2="326.0"/>
<line x1="-311.1" y1="452.0" x2="738.9" y2="326.0"/>
<line x1="-305.2" y1="452.0" x2="744.8" y2="326.0"/>
<line x1="-295.0" y1="452.0" x2="755.0" y2="326.0"/>
<line x1="-286.9" y1="452.0" x2="763.1" y2="326.0"/>
<line x1="-278.4" y1="452.0" x2="771.6" y2="326.0"/>
<line x1="-269.4" y1="452.0" x2="780.6" y2="326.0"/>
<line x1="-262.6" y1="452.0" x2="787.4" y2="326.0"/>
<line x1="-259.1" y1="452.0" x2="790.9" y2="326.0"/>
<line x1="-247.9" y1="452.0" x2="802.1" y2="326.0"/>
<line x1="-238.6" y1="452.0" x2="811.4" y2="326.0"/>
<line x1="-228.6" y1="452.0" x2="821.4" y2="326.0"/>
<line x1="-224.5" y1="452.0" x2="825.5" y2="326.0"/>
<line x1="-214.8" y1="452.0" x2="835.2" y2="326.0"/>
<line x1="-206.5" y1="452.0" x2="843.5" y2="326.0"/>
<line x1="-197.4" y1="452.0" x2="852.6" y2="326.0"/>
<line x1="-190.5" y1="452.0" x2="859.5" y2="326.0"/>
<line x1="-183.2" y1="452.0" x2="866.8" y2="326.0"/>
<line x1="-174.4" y1="452.0" x2="875.6" y2="326.0"/>
<line x1="-164.9" y1="452.0" x2="885.1" y2="326.0"/>
<line x1="-156.4" y1="452.0" x2="893.6" y2="326.0"/>
<line x1="-148.9" y1="452.0" x2="901.1" y2="326.0"/>
<line x1="-139.9" y1="452.0" x2="910.1" y2="326.0"/>
<line x1="-133.8" y1="452.0" x2="916.2" y2="326.0"/>
<line x1="-127.0" y1="452.0" x2="923.0" y2="326.0"/>
<line x1="-119.0" y1="452.0" x2="931.0" y2="326.0"/>
<line x1="-113.7" y1="452.0" x2="936.3" y2="326.0"/>
<line x1="-109.0" y1="452.0" x2="941.0" y2="326.0"/>
<line x1="-98.1" y1="452.0" x2="951.9" y2="326.0"/>
<line x1="-94.4" y1="452.0" x2="955.6" y2="326.0"/>
<line x1="-86.6" y1="452.0" x2="963.4" y2="326.0"/>
<line x1="-81.0" y1="452.0" x2="969.0" y2="326.0"/>
<line x1="-73.2" y1="452.0" x2="976.8" y2="326.0"/>
<line x1="-65.3" y1="452.0" x2="984.7" y2="326.0"/>
<line x1="-55.3" y1="452.0" x2="994.7" y2="326.0"/>
<line x1="-50.3" y1="452.0" x2="999.7" y2="326.0"/>
<line x1="-45.8" y1="452.0" x2="1004.2" y2="326.0"/>
<line x1="-38.0" y1="452.0" x2="1012.0" y2="326.0"/>
<line x1="-32.3" y1="452.0" x2="1017.7" y2="326.0"/>
<line x1="-24.2" y1="452.0" x2="1025.8" y2="326.0"/>
<line x1="-15.7" y1="452.0" x2="1034.3" y2="326.0"/>
<line x1="-9.9" y1="452.0" x2="1040.1" y2="326.0"/>
<line x1="-0.3" y1="452.0" x2="1049.7" y2="326.0"/>
<line x1="6.5" y1="452.0" x2="1056.5" y2="326.0"/>
<line x1="14.7" y1="452.0" x2="1064.7" y2="326.0"/>
<line x1="20.4" y1="452.0" x2="1070.4" y2="326.0"/>
<line x1="24.5" y1="452.0" x2="1074.5" y2="326.0"/>
<line x1="31.5" y1="452.0" x2="1081.5" y2="326.0"/>
<line x1="39.9" y1="452.0" x2="1089.9" y2="326.0"/>
<line x1="45.0" y1="452.0" x2="1095.0" y2="326.0"/>
<line x1="50.3" y1="452.0" x2="1100.3" y2="326.0"/>
<line x1="58.8" y1="452.0" x2="1108.8" y2="326.0"/>
<line x1="63.6" y1="452.0" x2="1113.6" y2="326.0"/>
<line x1="71.7" y1="452.0" x2="1121.7" y2="326.0"/>
<line x1="76.7" y1="452.0" x2="1126.7" y2="326.0"/>
<line x1="86.8" y1="452.0" x2="1136.8" y2="326.0"/>
<line x1="94.6" y1="452.0" x2="1144.6" y2="326.0"/>
<line x1="105.9" y1="452.0" x2="1155.9" y2="326.0"/>
<line x1="117.4" y1="452.0" x2="1167.4" y2="326.0"/>
<line x1="122.5" y1="452.0" x2="1172.5" y2="326.0"/>
<line x1="130.4" y1="452.0" x2="1180.4" y2="326.0"/>
<line x1="139.1" y1="452.0" x2="1189.1" y2="326.0"/>
<line x1="145.0" y1="452.0" x2="1195.0" y2="326.0"/>
<line x1="150.9" y1="452.0" x2="1200.9" y2="326.0"/>
<line x1="155.3" y1="452.0" x2="1205.3" y2="326.0"/>
<line x1="164.4" y1="452.0" x2="1214.4" y2="326.0"/>
<line x1="171.4" y1="452.0" x2="1221.4" y2="326.0"/>
<line x1="176.4" y1="452.0" x2="1226.4" y2="326.0"/>
<line x1="182.4" y1="452.0" x2="1232.4" y2="326.0"/>
<line x1="194.0" y1="452.0" x2="1244.0" y2="326.0"/>
<line x1="8.0" y1="452.0" x2="-202.0" y2="326.0"/>
<line x1="17.1" y1="452.0" x2="-192.9" y2="326.0"/>
<line x1="26.3" y1="452.0" x2="-183.7" y2="326.0"/>
<line x1="33.7" y1="452.0" x2="-176.3" y2="326.0"/>
<line x1="40.6" y1="452.0" x2="-169.4" y2="326.0"/>
<line x1="49.0" y1="452.0" x2="-161.0" y2="326.0"/>
<line x1="61.0" y1="452.0" x2="-149.0" y2="326.0"/>
<line x1="68.4" y1="452.0" x2="-141.6" y2="326.0"/>
<line x1="75.1" y1="452.0" x2="-134.9" y2="326.0"/>
<line x1="81.1" y1="452.0" x2="-128.9" y2="326.0"/>
<line x1="90.5" y1="452.0" x2="-119.5" y2="326.0"/>
<line x1="96.9" y1="452.0" x2="-113.1" y2="326.0"/>
<line x1="102.0" y1="452.0" x2="-108.0" y2="326.0"/>
<line x1="107.4" y1="452.0" x2="-102.6" y2="326.0"/>
<line x1="117.7" y1="452.0" x2="-92.3" y2="326.0"/>
<line x1="125.3" y1="452.0" x2="-84.7" y2="326.0"/>
<line x1="129.0" y1="452.0" x2="-81.0" y2="326.0"/>
<line x1="136.2" y1="452.0" x2="-73.8" y2="326.0"/>
<line x1="142.9" y1="452.0" x2="-67.1" y2="326.0"/>
<line x1="151.7" y1="452.0" x2="-58.3" y2="326.0"/>
<line x1="159.1" y1="452.0" x2="-50.9" y2="326.0"/>
<line x1="161.8" y1="452.0" x2="-48.2" y2="326.0"/>
<line x1="168.7" y1="452.0" x2="-41.3" y2="326.0"/>
<line x1="175.7" y1="452.0" x2="-34.3" y2="326.0"/>
<line x1="184.8" y1="452.0" x2="-25.2" y2="326.0"/>
<line x1="190.6" y1="452.0" x2="-19.4" y2="326.0"/>
<line x1="196.5" y1="452.0" x2="-13.5" y2="326.0"/>
<line x1="207.0" y1="452.0" x2="-3.0" y2="326.0"/>
<line x1="211.9" y1="452.0" x2="1.9" y2="326.0"/>
<line x1="222.6" y1="452.0" x2="12.6" y2="326.0"/>
<line x1="230.4" y1="452.0" x2="20.4" y2="326.0"/>
<line x1="235.3" y1="452.0" x2="25.3" y2="326.0"/>
<line x1="245.3" y1="452.0" x2="35.3" y2="326.0"/>
<line x1="252.2" y1="452.0" x2="42.2" y2="326.0"/>
<line x1="260.2" y1="452.0" x2="50.2" y2="326.0"/>
<line x1="267.0" y1="452.0" x2="57.0" y2="326.0"/>
<line x1="276.3" y1="452.0" x2="66.3" y2="326.0"/>
<line x1="285.1" y1="452.0" x2="75.1" y2="326.0"/>
<line x1="290.0" y1="452.0" x2="80.0" y2="326.0"/>
<line x1="299.0" y1="452.0" x2="89.0" y2="326.0"/>
<line x1="309.6" y1="452.0" x2="99.6" y2="326.0"/>
<line x1="312.7" y1="452.0" x2="102.7" y2="326.0"/>
<line x1="321.8" y1="452.0" x2="111.8" y2="326.0"/>
<line x1="331.1" y1="452.0" x2="121.1" y2="326.0"/>
<line x1="335.1" y1="452.0" x2="125.1" y2="326.0"/>
<line x1="340.6" y1="452.0" x2="130.6" y2="326.0"/>
<line x1="352.7" y1="452.0" x2="142.7" y2="326.0"/>
<line x1="359.1" y1="452.0" x2="149.1" y2="326.0"/>
<line x1="370.9" y1="452.0" x2="160.9" y2="326.0"/>
<line x1="378.2" y1="452.0" x2="168.2" y2="326.0"/>
<line x1="383.9" y1="452.0" x2="173.9" y2="326.0"/>
<line x1="389.0" y1="452.0" x2="179.0" y2="326.0"/>
<line x1="394.1" y1="452.0" x2="184.1" y2="326.0"/>
<line x1="404.1" y1="452.0" x2="194.1" y2="326.0"/>
</g>
<clipPath id="t4"><polygon points="194,292 372,292 372,298 380,298 380,323 194,323"/></clipPath>
<g clip-path="url(#t4)" stroke="#009090" stroke-width="1.1" fill="none" opacity="1">
<line x1="133.3" y1="323.0" x2="189.6" y2="292.0"/>
<line x1="137.7" y1="323.0" x2="194.0" y2="292.0"/>
<line x1="144.1" y1="323.0" x2="200.4" y2="292.0"/>
<line x1="148.6" y1="323.0" x2="205.0" y2="292.0"/>
<line x1="157.4" y1="323.0" x2="213.8" y2="292.0"/>
<line x1="161.8" y1="323.0" x2="218.1" y2="292.0"/>
<line x1="163.6" y1="323.0" x2="220.0" y2="292.0"/>
<line x1="169.8" y1="323.0" x2="226.1" y2="292.0"/>
<line x1="177.9" y1="323.0" x2="234.3" y2="292.0"/>
<line x1="183.5" y1="323.0" x2="239.9" y2="292.0"/>
<line x1="186.7" y1="323.0" x2="243.1" y2="292.0"/>
<line x1="195.9" y1="323.0" x2="252.2" y2="292.0"/>
<line x1="202.9" y1="323.0" x2="259.3" y2="292.0"/>
<line x1="210.6" y1="323.0" x2="267.0" y2="292.0"/>
<line x1="218.9" y1="323.0" x2="275.3" y2="292.0"/>
<line x1="225.9" y1="323.0" x2="282.2" y2="292.0"/>
<line x1="233.3" y1="323.0" x2="289.7" y2="292.0"/>
<line x1="237.3" y1="323.0" x2="293.7" y2="292.0"/>
<line x1="243.5" y1="323.0" x2="299.9" y2="292.0"/>
<line x1="251.7" y1="323.0" x2="308.1" y2="292.0"/>
<line x1="255.3" y1="323.0" x2="311.7" y2="292.0"/>
<line x1="264.1" y1="323.0" x2="320.5" y2="292.0"/>
<line x1="267.4" y1="323.0" x2="323.8" y2="292.0"/>
<line x1="273.2" y1="323.0" x2="329.6" y2="292.0"/>
<line x1="279.9" y1="323.0" x2="336.2" y2="292.0"/>
<line x1="285.1" y1="323.0" x2="341.5" y2="292.0"/>
<line x1="292.4" y1="323.0" x2="348.8" y2="292.0"/>
<line x1="301.3" y1="323.0" x2="357.7" y2="292.0"/>
<line x1="307.0" y1="323.0" x2="363.3" y2="292.0"/>
<line x1="317.3" y1="323.0" x2="373.6" y2="292.0"/>
<line x1="323.0" y1="323.0" x2="379.3" y2="292.0"/>
<line x1="327.6" y1="323.0" x2="383.9" y2="292.0"/>
<line x1="333.6" y1="323.0" x2="389.9" y2="292.0"/>
<line x1="340.4" y1="323.0" x2="396.8" y2="292.0"/>
<line x1="348.0" y1="323.0" x2="404.3" y2="292.0"/>
<line x1="351.3" y1="323.0" x2="407.7" y2="292.0"/>
<line x1="357.4" y1="323.0" x2="413.8" y2="292.0"/>
<line x1="360.7" y1="323.0" x2="417.0" y2="292.0"/>
<line x1="365.4" y1="323.0" x2="421.8" y2="292.0"/>
<line x1="371.0" y1="323.0" x2="427.4" y2="292.0"/>
<line x1="378.3" y1="323.0" x2="434.7" y2="292.0"/>
<line x1="385.2" y1="323.0" x2="441.6" y2="292.0"/>
</g>
<clipPath id="t4b"><polygon points="194,292 290,292 260,323 194,323"/></clipPath>
<g clip-path="url(#t4b)" stroke="#009090" stroke-width="1.2" fill="none" opacity="1">
<line x1="164.2" y1="323.0" x2="190.1" y2="292.0"/>
<line x1="167.2" y1="323.0" x2="193.1" y2="292.0"/>
<line x1="173.1" y1="323.0" x2="198.9" y2="292.0"/>
<line x1="178.9" y1="323.0" x2="204.8" y2="292.0"/>
<line x1="185.3" y1="323.0" x2="211.1" y2="292.0"/>
<line x1="190.2" y1="323.0" x2="216.0" y2="292.0"/>
<line x1="193.4" y1="323.0" x2="219.2" y2="292.0"/>
<line x1="194.6" y1="323.0" x2="220.5" y2="292.0"/>
<line x1="200.7" y1="323.0" x2="226.5" y2="292.0"/>
<line x1="205.3" y1="323.0" x2="231.2" y2="292.0"/>
<line x1="211.8" y1="323.0" x2="237.6" y2="292.0"/>
<line x1="217.0" y1="323.0" x2="242.9" y2="292.0"/>
<line x1="222.5" y1="323.0" x2="248.3" y2="292.0"/>
<line x1="228.6" y1="323.0" x2="254.4" y2="292.0"/>
<line x1="235.4" y1="323.0" x2="261.2" y2="292.0"/>
<line x1="240.5" y1="323.0" x2="266.4" y2="292.0"/>
<line x1="243.7" y1="323.0" x2="269.6" y2="292.0"/>
<line x1="249.2" y1="323.0" x2="275.0" y2="292.0"/>
<line x1="257.2" y1="323.0" x2="283.0" y2="292.0"/>
<line x1="263.1" y1="323.0" x2="289.0" y2="292.0"/>
<line x1="266.9" y1="323.0" x2="292.7" y2="292.0"/>
<line x1="272.9" y1="323.0" x2="298.8" y2="292.0"/>
<line x1="276.3" y1="323.0" x2="302.1" y2="292.0"/>
<line x1="277.3" y1="323.0" x2="303.2" y2="292.0"/>
<line x1="283.5" y1="323.0" x2="309.3" y2="292.0"/>
<line x1="286.9" y1="323.0" x2="312.7" y2="292.0"/>
<line x1="293.0" y1="323.0" x2="318.8" y2="292.0"/>
<line x1="189.1" y1="323.0" x2="168.4" y2="292.0"/>
<line x1="195.8" y1="323.0" x2="175.1" y2="292.0"/>
<line x1="200.1" y1="323.0" x2="179.5" y2="292.0"/>
<line x1="203.9" y1="323.0" x2="183.2" y2="292.0"/>
<line x1="211.8" y1="323.0" x2="191.1" y2="292.0"/>
<line x1="216.3" y1="323.0" x2="195.6" y2="292.0"/>
<line x1="222.8" y1="323.0" x2="202.2" y2="292.0"/>
<line x1="226.2" y1="323.0" x2="205.5" y2="292.0"/>
<line x1="233.3" y1="323.0" x2="212.7" y2="292.0"/>
<line x1="235.2" y1="323.0" x2="214.5" y2="292.0"/>
<line x1="240.9" y1="323.0" x2="220.3" y2="292.0"/>
<line x1="245.7" y1="323.0" x2="225.0" y2="292.0"/>
<line x1="249.6" y1="323.0" x2="228.9" y2="292.0"/>
<line x1="254.7" y1="323.0" x2="234.0" y2="292.0"/>
<line x1="257.8" y1="323.0" x2="237.1" y2="292.0"/>
<line x1="263.5" y1="323.0" x2="242.8" y2="292.0"/>
<line x1="266.8" y1="323.0" x2="246.1" y2="292.0"/>
<line x1="273.6" y1="323.0" x2="252.9" y2="292.0"/>
<line x1="280.8" y1="323.0" x2="260.1" y2="292.0"/>
<line x1="286.2" y1="323.0" x2="265.5" y2="292.0"/>
<line x1="289.3" y1="323.0" x2="268.7" y2="292.0"/>
<line x1="294.6" y1="323.0" x2="274.0" y2="292.0"/>
<line x1="299.3" y1="323.0" x2="278.6" y2="292.0"/>
<line x1="302.5" y1="323.0" x2="281.8" y2="292.0"/>
<line x1="309.5" y1="323.0" x2="288.8" y2="292.0"/>
<line x1="314.3" y1="323.0" x2="293.7" y2="292.0"/>
</g>
<g stroke="#009090" stroke-width="1.2"><line x1="30" y1="483" x2="45" y2="474"/><line x1="28" y1="500" x2="45" y2="492"/></g>
<rect x="6.5" y="221.5" width="44.5" height="15.5" fill="none" stroke="#ffff00" stroke-width="1.3"/>
<pattern id="pp1" patternUnits="userSpaceOnUse" x="5.25" y="221.00" width="8.900" height="7.200"><circle cx="4.45" cy="3.60" r="2.55" fill="#f00" stroke="#b00000" stroke-width="0.4"/><ellipse cx="4.45" cy="3.60" rx="0.7" ry="1.15" fill="#e0e8e8"/></pattern>
<rect x="5.25" y="221.00" width="44.50" height="14.40" fill="url(#pp1)"/>
<rect x="7.2" y="229.0" width="7" height="6.5" fill="#ff0000"/>
<rect x="9.0" y="230.4" width="1.3" height="2.8" fill="#e0e8e8"/>
<path d="M5.2 227.6 L14.2 227.6 L14.2 236.3" fill="none" stroke="#ffff00" stroke-width="1.4"/>
<rect x="60.5" y="221.5" width="44.8" height="15.5" fill="none" stroke="#ffff00" stroke-width="1.3"/>
<pattern id="pp2" patternUnits="userSpaceOnUse" x="59.55" y="221.00" width="8.900" height="7.200"><circle cx="4.45" cy="3.60" r="2.55" fill="#f00" stroke="#b00000" stroke-width="0.4"/><ellipse cx="4.45" cy="3.60" rx="0.7" ry="1.15" fill="#e0e8e8"/></pattern>
<rect x="59.55" y="221.00" width="44.50" height="14.40" fill="url(#pp2)"/>
<rect x="61.5" y="229.0" width="7" height="6.5" fill="#ff0000"/>
<rect x="63.3" y="230.4" width="1.3" height="2.8" fill="#e0e8e8"/>
<path d="M59.5 227.6 L68.5 227.6 L68.5 236.3" fill="none" stroke="#ffff00" stroke-width="1.4"/>
<rect x="6.5" y="244.7" width="177.1" height="15.1" fill="none" stroke="#ffff00" stroke-width="1.3"/>
<pattern id="pp3" patternUnits="userSpaceOnUse" x="5.25" y="244.55" width="8.900" height="7.300"><circle cx="4.45" cy="3.65" r="2.55" fill="#f00" stroke="#b00000" stroke-width="0.4"/><ellipse cx="4.45" cy="3.65" rx="0.7" ry="1.15" fill="#e0e8e8"/></pattern>
<rect x="5.25" y="244.55" width="178.00" height="14.60" fill="url(#pp3)"/>
<rect x="7.2" y="252.7" width="7" height="6.5" fill="#ff0000"/>
<rect x="9.0" y="254.1" width="1.3" height="2.8" fill="#e0e8e8"/>
<path d="M5.2 251.3 L14.2 251.3 L14.2 260" fill="none" stroke="#ffff00" stroke-width="1.4"/>
<rect x="6.5" y="268.6" width="177.1" height="15" fill="none" stroke="#ffff00" stroke-width="1.3"/>
<pattern id="pp4" patternUnits="userSpaceOnUse" x="5.25" y="268.25" width="8.900" height="7.500"><circle cx="4.45" cy="3.75" r="2.55" fill="#f00" stroke="#b00000" stroke-width="0.4"/><ellipse cx="4.45" cy="3.75" rx="0.7" ry="1.15" fill="#e0e8e8"/></pattern>
<rect x="5.25" y="268.25" width="178.00" height="15.00" fill="url(#pp4)"/>
<rect x="7.2" y="276.7" width="7" height="6.5" fill="#ff0000"/>
<rect x="9.0" y="278.1" width="1.3" height="2.8" fill="#e0e8e8"/>
<path d="M5.2 275.3 L14.2 275.3 L14.2 284" fill="none" stroke="#ffff00" stroke-width="1.4"/>
<rect x="194" y="244.4" width="177.7" height="15.6" fill="none" stroke="#ffff00" stroke-width="1.3"/>
<pattern id="pp5" patternUnits="userSpaceOnUse" x="193.57" y="244.55" width="8.850" height="7.300"><circle cx="4.42" cy="3.65" r="2.55" fill="#f00" stroke="#b00000" stroke-width="0.4"/><ellipse cx="4.42" cy="3.65" rx="0.7" ry="1.15" fill="#e0e8e8"/></pattern>
<rect x="193.57" y="244.55" width="177.00" height="14.60" fill="url(#pp5)"/>
<rect x="195.5" y="252.7" width="7" height="6.5" fill="#ff0000"/>
<rect x="197.3" y="254.1" width="1.3" height="2.8" fill="#e0e8e8"/>
<path d="M193.5 251.3 L202.5 251.3 L202.5 260" fill="none" stroke="#ffff00" stroke-width="1.4"/>
<rect x="194" y="268.3" width="177.7" height="15" fill="none" stroke="#ffff00" stroke-width="1.3"/>
<pattern id="pp6" patternUnits="userSpaceOnUse" x="193.57" y="268.25" width="8.850" height="7.500"><circle cx="4.42" cy="3.75" r="2.55" fill="#f00" stroke="#b00000" stroke-width="0.4"/><ellipse cx="4.42" cy="3.75" rx="0.7" ry="1.15" fill="#e0e8e8"/></pattern>
<rect x="193.57" y="268.25" width="177.00" height="15.00" fill="url(#pp6)"/>
<rect x="195.5" y="276.7" width="7" height="6.5" fill="#ff0000"/>
<rect x="197.3" y="278.1" width="1.3" height="2.8" fill="#e0e8e8"/>
<path d="M193.5 275.3 L202.5 275.3 L202.5 284" fill="none" stroke="#ffff00" stroke-width="1.4"/>
<rect x="202.2" y="298" width="177.2" height="15.9" fill="none" stroke="#ffff00" stroke-width="1.3"/>
<pattern id="pp7" patternUnits="userSpaceOnUse" x="202.57" y="297.75" width="8.850" height="7.500"><circle cx="4.42" cy="3.75" r="2.55" fill="#f00" stroke="#b00000" stroke-width="0.4"/><ellipse cx="4.42" cy="3.75" rx="0.7" ry="1.15" fill="#e0e8e8"/></pattern>
<rect x="202.57" y="297.75" width="177.00" height="15.00" fill="url(#pp7)"/>
<rect x="204.5" y="306.2" width="7" height="6.5" fill="#ff0000"/>
<rect x="206.3" y="307.6" width="1.3" height="2.8" fill="#e0e8e8"/>
<path d="M202.5 304.8 L211.5 304.8 L211.5 313.5" fill="none" stroke="#ffff00" stroke-width="1.4"/>
<path d="M6.3 300 L13 292.3 L193.3 292.3 L193.3 451.3 L6.3 451.3 Z" fill="none" stroke="#ffff00" stroke-width="1.3"/>
<pattern id="pp8" patternUnits="userSpaceOnUse" x="9.48" y="295.60" width="8.830" height="7.590"><circle cx="4.42" cy="3.80" r="2.55" fill="#f00" stroke="#b00000" stroke-width="0.4"/><ellipse cx="4.42" cy="3.80" rx="0.7" ry="1.15" fill="#e0e8e8"/></pattern>
<rect x="9.48" y="295.60" width="176.60" height="151.80" fill="url(#pp8)"/>
<rect x="10.5" y="295.8" width="7" height="7" fill="#ff0000"/><rect x="13.3" y="298" width="1.3" height="3" fill="#e8e8e8"/>
<rect x="21.5" y="482.5" width="30" height="21" fill="none" stroke="#ffff00" stroke-width="1.6"/>
<circle cx="25" cy="486" r="3.3" fill="#ff0000"/><circle cx="25" cy="500" r="3.3" fill="#ff0000"/>
<ellipse cx="25" cy="486" rx="1" ry="1.6" fill="#e0e0e0"/><ellipse cx="25" cy="500" rx="1" ry="1.6" fill="#e0e0e0"/>
<g stroke="#ffff00" stroke-width="1.2" fill="none"><path d="M31 486 L39 486 M37 486 L37 500 M31 500 L39 500 M35 491 L41 491"/></g>
<clipPath id="cw"><rect x="380" y="220" width="484" height="104"/></clipPath>
<g clip-path="url(#cw)" stroke="#fff" fill="none" stroke-width="1.15">
<path d="M434 246.0 L554.0 330"/>
<path d="M434 249.5 L549.0 330"/>
<path d="M434 253.6 L543.1 330"/>
<path d="M434 257.1 L538.1 330"/>
<path d="M434 261.3 L532.2 330"/>
<path d="M434 268.9 L521.3 330"/>
<path d="M434 276.5 L510.4 330"/>
<path d="M434 280.0 L505.4 330"/>
<path d="M434 284.1 L499.5 330"/>
<path d="M434 291.8 L488.6 330"/>
<path d="M434 299.4 L477.7 330"/>
<path d="M434 302.9 L472.7 330"/>
<path d="M434 307.0 L466.8 330"/>
<path d="M434 314.7 L455.9 330"/>
<path d="M434 322.3 L445.0 330"/>
<path d="M434 325.8 L440.0 330"/>
<path d="M428 262.0 L446 262.0"/>
<path d="M428 269.6 L446 269.6"/>
<path d="M428 277.2 L446 277.2"/>
<path d="M486.0 255 L516.0 281.0 L516.0 330"/>
<path d="M490.2 255 L521.5 282.0 L521.5 330"/>
<path d="M494.4 255 L527.0 283.1 L527.0 330"/>
<path d="M498.6 255 L532.5 284.1 L532.5 330"/>
<path d="M502.8 255 L538.0 285.2 L538.0 330"/>
<path d="M507.0 255 L543.5 286.2 L543.5 330"/>
<path d="M465.0 253 L465.0 270 L540.0 330"/>
<path d="M473.0 253 L473.0 274 L543.0 330"/>
<path d="M483.0 253 L483.0 262 L568.0 330"/>
<path d="M491.0 253 L491.0 266 L571.0 330"/>
<path d="M509.3 253 L512.3 262 L512.3 330"/>
<path d="M513.7 253 L516.3 266 L516.3 330"/>
<path d="M518.1 253 L521.1 262 L521.1 330"/>
<path d="M522.5 253 L525.1 266 L525.1 330"/>
<path d="M527.0 253 L530.0 262 L530.0 330"/>
<path d="M531.4 253 L534.0 266 L534.0 330"/>
<path d="M535.9 253 L538.9 262 L538.9 330"/>
<path d="M540.2 253 L542.9 266 L542.9 330"/>
<path d="M544.7 253 L547.7 262 L547.7 330"/>
<path d="M549.1 253 L551.7 266 L551.7 330"/>
<path d="M553.5 253 L556.5 262 L556.5 330"/>
<path d="M557.9 253 L560.5 266 L560.5 330"/>
<path d="M562.4 253 L565.4 262 L565.4 330"/>
<path d="M566.8 253 L569.4 266 L569.4 330"/>
<path d="M571.2 253 L574.2 262 L574.2 330"/>
<path d="M575.6 253 L578.2 266 L578.2 330"/>
<path d="M580.1 253 L583.1 262 L583.1 330"/>
<path d="M584.5 253 L587.1 266 L587.1 330"/>
<path d="M589.0 253 L592.0 262 L592.0 330"/>
<path d="M593.4 253 L596.0 266 L596.0 330"/>
<path d="M597.8 253 L600.8 262 L600.8 330"/>
<path d="M602.2 253 L604.8 266 L604.8 330"/>
<path d="M606.6 257 L606.6 321.9 L591.9 330"/>
<path d="M610.6 253 L611.6 262 L611.6 324.9 L602.4 330"/>
<path d="M615.5 257 L615.5 317.0 L591.9 330"/>
<path d="M619.5 253 L620.5 262 L620.5 320.0 L602.4 330"/>
<path d="M624.4 257 L624.4 312.2 L591.9 330"/>
<path d="M628.4 253 L629.4 262 L629.4 315.2 L602.4 330"/>
<path d="M633.2 257 L633.2 292.0 L564.1 330"/>
<path d="M637.2 253 L638.2 262 L638.2 295.0 L574.6 330"/>
<path d="M642.0 257 L642.0 292.0 L573.0 330"/>
<path d="M646.0 253 L647.0 262 L647.0 295.0 L583.4 330"/>
<path d="M650.9 257 L650.9 292.0 L581.8 330"/>
<path d="M654.9 253 L655.9 262 L655.9 295.0 L592.3 330"/>
<path d="M659.8 257 L659.8 292.0 L590.7 330"/>
<path d="M663.8 253 L664.8 262 L664.8 295.0 L601.1 330"/>
<path d="M668.6 257 L668.6 287.8 L591.9 330"/>
<path d="M672.6 253 L673.6 262 L673.6 290.8 L602.4 330"/>
<path d="M677.5 257 L677.5 283.0 L591.9 330"/>
<path d="M681.5 253 L682.5 262 L682.5 286.0 L602.4 330"/>
<path d="M556.0 257 L570.0 272"/>
<path d="M590.0 257 L578.0 272"/>
<path d="M560.0 257 L571.5 272"/>
<path d="M586.0 257 L576.5 272"/>
<path d="M564.0 257 L573.0 272"/>
<path d="M582.0 257 L575.0 272"/>
<path d="M568.0 257 L574.5 272"/>
<path d="M578.0 257 L573.5 272"/>
<path d="M685.5 241 L685.5 288"/>
<path d="M741 247.0 L741.0 247.0 L590.1 330"/>
<path d="M741 249.9 L734.0 249.9 L588.4 330"/>
<path d="M741 252.8 L727.0 252.8 L586.6 330"/>
<path d="M741 255.7 L735.0 255.7 L599.9 330"/>
<path d="M741 258.6 L728.0 258.6 L598.2 330"/>
<path d="M741 261.5 L731.0 261.5 L606.5 330"/>
<path d="M741 264.4 L739.0 264.4 L619.7 330"/>
<path d="M741 267.3 L732.0 267.3 L618.0 330"/>
<path d="M741 270.2 L725.0 270.2 L616.3 330"/>
<path d="M741 273.1 L733.0 273.1 L629.5 330"/>
<path d="M741 276.0 L736.0 276.0 L637.8 330"/>
<path d="M741 278.9 L729.0 278.9 L636.1 330"/>
<path d="M741 281.8 L737.0 281.8 L649.4 330"/>
<path d="M741 284.7 L730.0 284.7 L647.6 330"/>
<path d="M741 287.6 L723.0 287.6 L645.9 330"/>
<path d="M741 290.5 L741.0 290.5 L669.2 330"/>
<path d="M741 293.4 L734.0 293.4 L667.5 330"/>
<path d="M741 296.3 L727.0 296.3 L665.7 330"/>
<path d="M741 299.2 L735.0 299.2 L679.0 330"/>
<path d="M741 302.1 L728.0 302.1 L677.3 330"/>
<path d="M741 305.0 L731.0 305.0 L685.5 330"/>
<path d="M741 307.9 L739.0 307.9 L698.8 330"/>
<path d="M741 310.8 L732.0 310.8 L697.1 330"/>
<path d="M741 313.7 L725.0 313.7 L695.4 330"/>
<path d="M741 316.6 L733.0 316.6 L708.6 330"/>
<path d="M741 319.5 L736.0 319.5 L716.9 330"/>
<path d="M741 322.4 L729.0 322.4 L715.2 330"/>
</g>
<rect x="415.3" y="242.4" width="18.5" height="90" fill="#000"/>
<rect x="415.3" y="242.4" width="18.4" height="87.6" fill="none" stroke="#fff" stroke-width="1.3"/>
<circle cx="419.3" cy="245.3" r="1.95" fill="#000" stroke="#fff" stroke-width="1.45"/>
<circle cx="427.4" cy="245.3" r="1.95" fill="#000" stroke="#fff" stroke-width="1.45"/>
<circle cx="419.3" cy="252.9" r="1.95" fill="#000" stroke="#fff" stroke-width="1.45"/>
<circle cx="427.4" cy="252.9" r="1.95" fill="#000" stroke="#fff" stroke-width="1.45"/>
<circle cx="419.3" cy="260.6" r="1.95" fill="#000" stroke="#fff" stroke-width="1.45"/>
<circle cx="427.4" cy="260.6" r="1.95" fill="#000" stroke="#fff" stroke-width="1.45"/>
<circle cx="419.3" cy="268.2" r="1.95" fill="#000" stroke="#fff" stroke-width="1.45"/>
<circle cx="427.4" cy="268.2" r="1.95" fill="#000" stroke="#fff" stroke-width="1.45"/>
<circle cx="419.3" cy="275.8" r="1.95" fill="#000" stroke="#fff" stroke-width="1.45"/>
<circle cx="427.4" cy="275.8" r="1.95" fill="#000" stroke="#fff" stroke-width="1.45"/>
<circle cx="419.3" cy="283.4" r="1.95" fill="#000" stroke="#fff" stroke-width="1.45"/>
<circle cx="427.4" cy="283.4" r="1.95" fill="#000" stroke="#fff" stroke-width="1.45"/>
<circle cx="419.3" cy="291.1" r="1.95" fill="#000" stroke="#fff" stroke-width="1.45"/>
<circle cx="427.4" cy="291.1" r="1.95" fill="#000" stroke="#fff" stroke-width="1.45"/>
<circle cx="419.3" cy="298.7" r="1.95" fill="#000" stroke="#fff" stroke-width="1.45"/>
<circle cx="427.4" cy="298.7" r="1.95" fill="#000" stroke="#fff" stroke-width="1.45"/>
<circle cx="419.3" cy="306.3" r="1.95" fill="#000" stroke="#fff" stroke-width="1.45"/>
<circle cx="427.4" cy="306.3" r="1.95" fill="#000" stroke="#fff" stroke-width="1.45"/>
<circle cx="419.3" cy="314.0" r="1.95" fill="#000" stroke="#fff" stroke-width="1.45"/>
<circle cx="427.4" cy="314.0" r="1.95" fill="#000" stroke="#fff" stroke-width="1.45"/>
<circle cx="419.3" cy="321.6" r="1.95" fill="#000" stroke="#fff" stroke-width="1.45"/>
<circle cx="427.4" cy="321.6" r="1.95" fill="#000" stroke="#fff" stroke-width="1.45"/>
<rect x="416.5" y="243" width="5.5" height="5" fill="#fff"/>
<rect x="452.2" y="241.2" width="44.6" height="15.6" fill="#000"/>
<rect x="452.2" y="241.2" width="44.6" height="15.6" fill="none" stroke="#fff" stroke-width="1.3"/>
<circle cx="455.7" cy="244.7" r="1.95" fill="#000" stroke="#fff" stroke-width="1.45"/>
<circle cx="464.8" cy="244.7" r="1.95" fill="#000" stroke="#fff" stroke-width="1.45"/>
<circle cx="473.9" cy="244.7" r="1.95" fill="#000" stroke="#fff" stroke-width="1.45"/>
<circle cx="483.0" cy="244.7" r="1.95" fill="#000" stroke="#fff" stroke-width="1.45"/>
<circle cx="492.1" cy="244.7" r="1.95" fill="#000" stroke="#fff" stroke-width="1.45"/>
<circle cx="455.7" cy="252.2" r="1.95" fill="#000" stroke="#fff" stroke-width="1.45"/>
<circle cx="464.8" cy="252.2" r="1.95" fill="#000" stroke="#fff" stroke-width="1.45"/>
<circle cx="473.9" cy="252.2" r="1.95" fill="#000" stroke="#fff" stroke-width="1.45"/>
<circle cx="483.0" cy="252.2" r="1.95" fill="#000" stroke="#fff" stroke-width="1.45"/>
<circle cx="492.1" cy="252.2" r="1.95" fill="#000" stroke="#fff" stroke-width="1.45"/>
<rect x="489.5" y="242" width="5.5" height="5" fill="#fff"/>
<rect x="505.2" y="241.2" width="180.6" height="15.6" fill="#000"/>
<rect x="505.2" y="241.2" width="180.6" height="15.6" fill="none" stroke="#fff" stroke-width="1.3"/>
<circle cx="509.3" cy="244.7" r="1.95" fill="#000" stroke="#fff" stroke-width="1.45"/>
<circle cx="518.1" cy="244.7" r="1.95" fill="#000" stroke="#fff" stroke-width="1.45"/>
<circle cx="527.0" cy="244.7" r="1.95" fill="#000" stroke="#fff" stroke-width="1.45"/>
<circle cx="535.9" cy="244.7" r="1.95" fill="#000" stroke="#fff" stroke-width="1.45"/>
<circle cx="544.7" cy="244.7" r="1.95" fill="#000" stroke="#fff" stroke-width="1.45"/>
<circle cx="553.5" cy="244.7" r="1.95" fill="#000" stroke="#fff" stroke-width="1.45"/>
<circle cx="562.4" cy="244.7" r="1.95" fill="#000" stroke="#fff" stroke-width="1.45"/>
<circle cx="571.2" cy="244.7" r="1.95" fill="#000" stroke="#fff" stroke-width="1.45"/>
<circle cx="580.1" cy="244.7" r="1.95" fill="#000" stroke="#fff" stroke-width="1.45"/>
<circle cx="589.0" cy="244.7" r="1.95" fill="#000" stroke="#fff" stroke-width="1.45"/>
<circle cx="597.8" cy="244.7" r="1.95" fill="#000" stroke="#fff" stroke-width="1.45"/>
<circle cx="606.6" cy="244.7" r="1.95" fill="#000" stroke="#fff" stroke-width="1.45"/>
<circle cx="615.5" cy="244.7" r="1.95" fill="#000" stroke="#fff" stroke-width="1.45"/>
<circle cx="624.4" cy="244.7" r="1.95" fill="#000" stroke="#fff" stroke-width="1.45"/>
<circle cx="633.2" cy="244.7" r="1.95" fill="#000" stroke="#fff" stroke-width="1.45"/>
<circle cx="642.0" cy="244.7" r="1.95" fill="#000" stroke="#fff" stroke-width="1.45"/>
<circle cx="650.9" cy="244.7" r="1.95" fill="#000" stroke="#fff" stroke-width="1.45"/>
<circle cx="659.8" cy="244.7" r="1.95" fill="#000" stroke="#fff" stroke-width="1.45"/>
<circle cx="668.6" cy="244.7" r="1.95" fill="#000" stroke="#fff" stroke-width="1.45"/>
<circle cx="677.5" cy="244.7" r="1.95" fill="#000" stroke="#fff" stroke-width="1.45"/>
<circle cx="509.3" cy="252.4" r="1.95" fill="#000" stroke="#fff" stroke-width="1.45"/>
<circle cx="518.1" cy="252.4" r="1.95" fill="#000" stroke="#fff" stroke-width="1.45"/>
<circle cx="527.0" cy="252.4" r="1.95" fill="#000" stroke="#fff" stroke-width="1.45"/>
<circle cx="535.9" cy="252.4" r="1.95" fill="#000" stroke="#fff" stroke-width="1.45"/>
<circle cx="544.7" cy="252.4" r="1.95" fill="#000" stroke="#fff" stroke-width="1.45"/>
<circle cx="553.5" cy="252.4" r="1.95" fill="#000" stroke="#fff" stroke-width="1.45"/>
<circle cx="562.4" cy="252.4" r="1.95" fill="#000" stroke="#fff" stroke-width="1.45"/>
<circle cx="571.2" cy="252.4" r="1.95" fill="#000" stroke="#fff" stroke-width="1.45"/>
<circle cx="580.1" cy="252.4" r="1.95" fill="#000" stroke="#fff" stroke-width="1.45"/>
<circle cx="589.0" cy="252.4" r="1.95" fill="#000" stroke="#fff" stroke-width="1.45"/>
<circle cx="597.8" cy="252.4" r="1.95" fill="#000" stroke="#fff" stroke-width="1.45"/>
<circle cx="606.6" cy="252.4" r="1.95" fill="#000" stroke="#fff" stroke-width="1.45"/>
<circle cx="615.5" cy="252.4" r="1.95" fill="#000" stroke="#fff" stroke-width="1.45"/>
<circle cx="624.4" cy="252.4" r="1.95" fill="#000" stroke="#fff" stroke-width="1.45"/>
<circle cx="633.2" cy="252.4" r="1.95" fill="#000" stroke="#fff" stroke-width="1.45"/>
<circle cx="642.0" cy="252.4" r="1.95" fill="#000" stroke="#fff" stroke-width="1.45"/>
<circle cx="650.9" cy="252.4" r="1.95" fill="#000" stroke="#fff" stroke-width="1.45"/>
<circle cx="659.8" cy="252.4" r="1.95" fill="#000" stroke="#fff" stroke-width="1.45"/>
<circle cx="668.6" cy="252.4" r="1.95" fill="#000" stroke="#fff" stroke-width="1.45"/>
<circle cx="677.5" cy="252.4" r="1.95" fill="#000" stroke="#fff" stroke-width="1.45"/>
<path d="M506.4 241 L506.4 257" stroke="#fff" stroke-width="1"/>
<path d="M524.1 241 L524.1 257" stroke="#fff" stroke-width="1"/>
<path d="M531.8 241 L531.8 257" stroke="#fff" stroke-width="1"/>
<path d="M549.5 241 L549.5 257" stroke="#fff" stroke-width="1"/>
<path d="M559.5 241 L559.5 257" stroke="#fff" stroke-width="1"/>
<path d="M577.2 241 L577.2 257" stroke="#fff" stroke-width="1"/>
<path d="M584.9 241 L584.9 257" stroke="#fff" stroke-width="1"/>
<path d="M602.5 241 L602.5 257" stroke="#fff" stroke-width="1"/>
<path d="M612.6 241 L612.6 257" stroke="#fff" stroke-width="1"/>
<path d="M630.3 241 L630.3 257" stroke="#fff" stroke-width="1"/>
<path d="M638.0 241 L638.0 257" stroke="#fff" stroke-width="1"/>
<path d="M655.6 241 L655.6 257" stroke="#fff" stroke-width="1"/>
<path d="M665.7 241 L665.7 257" stroke="#fff" stroke-width="1"/>
<rect x="678" y="242" width="6" height="5" fill="#fff"/>
<rect x="740.2" y="242.4" width="18.5" height="90" fill="#000"/>
<rect x="740.2" y="242.4" width="18.5" height="87.6" fill="none" stroke="#fff" stroke-width="1.3"/>
<circle cx="744.2" cy="245.3" r="1.95" fill="#000" stroke="#fff" stroke-width="1.45"/>
<circle cx="753.5" cy="245.3" r="1.95" fill="#000" stroke="#fff" stroke-width="1.45"/>
<circle cx="744.2" cy="252.9" r="1.95" fill="#000" stroke="#fff" stroke-width="1.45"/>
<circle cx="753.5" cy="252.9" r="1.95" fill="#000" stroke="#fff" stroke-width="1.45"/>
<circle cx="744.2" cy="260.6" r="1.95" fill="#000" stroke="#fff" stroke-width="1.45"/>
<circle cx="753.5" cy="260.6" r="1.95" fill="#000" stroke="#fff" stroke-width="1.45"/>
<circle cx="744.2" cy="268.2" r="1.95" fill="#000" stroke="#fff" stroke-width="1.45"/>
<circle cx="753.5" cy="268.2" r="1.95" fill="#000" stroke="#fff" stroke-width="1.45"/>
<circle cx="744.2" cy="275.8" r="1.95" fill="#000" stroke="#fff" stroke-width="1.45"/>
<circle cx="753.5" cy="275.8" r="1.95" fill="#000" stroke="#fff" stroke-width="1.45"/>
<circle cx="744.2" cy="283.4" r="1.95" fill="#000" stroke="#fff" stroke-width="1.45"/>
<circle cx="753.5" cy="283.4" r="1.95" fill="#000" stroke="#fff" stroke-width="1.45"/>
<circle cx="744.2" cy="291.1" r="1.95" fill="#000" stroke="#fff" stroke-width="1.45"/>
<circle cx="753.5" cy="291.1" r="1.95" fill="#000" stroke="#fff" stroke-width="1.45"/>
<circle cx="744.2" cy="298.7" r="1.95" fill="#000" stroke="#fff" stroke-width="1.45"/>
<circle cx="753.5" cy="298.7" r="1.95" fill="#000" stroke="#fff" stroke-width="1.45"/>
<circle cx="744.2" cy="306.3" r="1.95" fill="#000" stroke="#fff" stroke-width="1.45"/>
<circle cx="753.5" cy="306.3" r="1.95" fill="#000" stroke="#fff" stroke-width="1.45"/>
<circle cx="744.2" cy="314.0" r="1.95" fill="#000" stroke="#fff" stroke-width="1.45"/>
<circle cx="753.5" cy="314.0" r="1.95" fill="#000" stroke="#fff" stroke-width="1.45"/>
<circle cx="744.2" cy="321.6" r="1.95" fill="#000" stroke="#fff" stroke-width="1.45"/>
<circle cx="753.5" cy="321.6" r="1.95" fill="#000" stroke="#fff" stroke-width="1.45"/>
<g fill="#ffff00" font-family="Liberation Sans" font-weight="bold" font-size="5">
<text x="432.5" y="242">TP1</text><text x="441.5" y="249.5">TP8</text><text x="683" y="243.5">TP7</text><text x="728.5" y="246">TP6</text>
</g>
</svg>
<!-- dialog frame -->
<div class="a" style="left:43px;top:323px;width:771px;height:520px;background:linear-gradient(90deg,#0018d8 0px,#0020e0 1px,#1050e8 2px,#1a6cf0 3px,#1a6cf0 4px,#0050e0 5px,#0050e0 6px,transparent 6px,transparent 765px,#5080ff 765px,#0044f0 766px,#0040e0 767px,#0030c0 768px,#0020a0 769px,#001890 770px,#001890 771px);border-radius:8px 8px 0 0"></div>
<div class="a" style="left:43px;top:323px;width:771px;height:35px;border-radius:7px 7px 0 0;background:linear-gradient(#3d95ff 0px,#2a7cf8 1px,#0a62f0 3px,#0058e6 7px,#0054e3 16px,#005aea 22px,#0064f8 27px,#0066ff 32px,#0050dd 34px,#0040c0 35px)"></div>
<div class="a" style="left:808px;top:325px;width:6px;height:33px;border-top-right-radius:5px;background:linear-gradient(90deg,rgba(0,40,200,0) 0,rgba(0,40,190,0.5) 3px,rgba(0,24,140,0.9) 6px)"></div>
<div class="a" style="left:49px;top:358px;width:759px;height:480px;background:#ece9d8"></div>
<!-- etched panel border -->
<div class="a" style="left:49px;top:364px;width:759px;height:480px;border-top:1px solid #aca899;border-left:1px solid #aca899;border-right:1px solid #fff"></div>
<div class="a" style="left:50px;top:365px;width:757px;height:480px;border-top:1px solid #fff;border-left:1px solid #fff;border-right:1px solid #aca899"></div>
<!-- title icon -->
<svg class="a" style="left:51px;top:332px" width="22" height="19" viewBox="0 0 22 19">
 <rect width="22" height="19" fill="#fff"/>
 <path d="M1 12 Q5 19 10.5 18.5 Q16 19 20 13 L20 18 L1 18 Z" fill="#eaa84a"/>
 <path d="M18 2.5 Q21 3 21 8 L19 8 Z" fill="#eeb050"/>
 <circle cx="10.5" cy="8.3" r="7.6" fill="#eca93e"/>
 <path d="M2 8.5 Q4 7 6 9.5 L7 6 L8 10 Q10 8 11 10 L12.5 6 L13.5 10 Q16 9 19 8.5" stroke="#8a6a30" stroke-width="1.3" fill="none" opacity="0.8"/>
</svg>
<div class="a" style="left:77px;top:336px;font-family:'Liberation Mono',monospace;font-weight:bold;font-size:17px;letter-spacing:0;transform:scaleX(1.072);transform-origin:0 0;color:#fff;white-space:pre;line-height:16px;text-shadow:1px 1px 0 #0a246a">Match Component</div>
<!-- min -->
<div class="a" style="left:714px;top:330px;width:28px;height:25px;border:1px solid #fff;border-radius:3px;background:radial-gradient(circle at 20% 15%,#7aa4ff 0,#2e6cf4 45%,#1c52e0 100%)"></div>
<div class="a" style="left:720px;top:345px;width:10px;height:4px;background:#fff"></div>
<!-- max disabled -->
<div class="a" style="left:745px;top:330px;width:29px;height:25px;border:1px solid #5c88ec;border-radius:3px;background:linear-gradient(135deg,#2a66f0,#1a54e0)"></div>
<div class="a" style="left:752px;top:336px;width:16px;height:13px;border:1px solid #6a92ec;border-top-width:3px"></div>
<!-- close -->
<div class="a" style="left:777px;top:330px;width:29px;height:25px;border:1px solid #fff;border-radius:3px;background:radial-gradient(circle at 20% 15%,#f09070 0,#e05a34 45%,#c83c14 100%)"></div>
<svg class="a" style="left:777px;top:330px" width="29" height="25" viewBox="0 0 29 25"><path d="M7.5 7 L21.5 18.5 M21.5 7 L7.5 18.5" stroke="#fff" stroke-width="2.6"/></svg>

<!-- Cache component label -->
<div class="txt" style="left:180px;top:387px;letter-spacing:0.3px">Cache Compoent</div>
<!-- listview -->
<div class="a" style="left:107px;top:412px;width:342px;height:367px;border:1px solid;border-color:#aca899 #fff #fff #aca899"></div>
<div class="a" style="left:108px;top:413px;width:340px;height:365px;border:1px solid;border-color:#716f64 #f1efe2 #f1efe2 #716f64;background:#fff"></div>
<!-- header cells -->
<div class="a" style="left:109px;top:414px;width:97px;height:20px;background:#ece9d8;border-top:1px solid #fff;border-left:1px solid #fff;border-right:1px solid #716f64;border-bottom:1px solid #716f64;box-shadow:inset -1px -1px 0 #aca899"></div>
<div class="a" style="left:206px;top:414px;width:117px;height:20px;background:#ece9d8;border-top:1px solid #fff;border-left:1px solid #fff;border-right:1px solid #716f64;border-bottom:1px solid #716f64;box-shadow:inset -1px -1px 0 #aca899"></div>
<div class="a" style="left:323px;top:414px;width:123px;height:20px;background:#ece9d8;border-top:1px solid #fff;border-left:1px solid #fff;border-right:1px solid #716f64;border-bottom:1px solid #716f64;box-shadow:inset -1px -1px 0 #aca899"></div>
<div class="txt" style="left:119px;top:416px;letter-spacing:0.3px">Component</div>
<div class="txt" style="left:215px;top:416px;letter-spacing:0.25px">Old Designator</div>
<div class="txt" style="left:331.5px;top:416px;letter-spacing:0.45px">New Designator</div>
<!-- rows -->
<div class="txt" style="left:116px;top:437px;line-height:16.5px;letter-spacing:0.3px">Component
Component
Component
Component
Component
Component
Component
Component
Component</div>
<div class="txt" style="left:214px;top:437px;line-height:16.5px;letter-spacing:0.3px">U1
JP7
JP1
JP2
JP3
JP5
JP6
JP8
JP4</div>
<div class="txt" style="left:331px;top:437px;line-height:16.5px;letter-spacing:0.3px">U1</div>

<!-- buttons -->
<div class="btn" style="left:458px;top:489px;width:82px;height:31px"></div>
<div class="txt" style="left:478px;top:496px;letter-spacing:0.2px">Assign</div>
<div class="btn" style="left:458px;top:649px;width:79px;height:30px"></div>
<div class="txt" style="left:468px;top:655px;letter-spacing:0.3px">UnAssign</div>

<!-- source -->
<div class="txt" style="left:581px;top:388px;letter-spacing:0.35px">Source Component</div>
<div class="a" style="left:555px;top:415px;width:182px;height:363px;border:1px solid;border-color:#aca899 #fff #fff #aca899"></div>
<div class="a" style="left:556px;top:416px;width:180px;height:361px;border:1px solid;border-color:#716f64 #f1efe2 #f1efe2 #716f64;background:#fff"></div>
<div class="a" style="left:557px;top:482px;width:31px;height:17px;background:#316ac5;outline:1px dotted #c8a040;outline-offset:-1px"></div>
<div class="txt" style="left:559px;top:416px;font-size:15px;line-height:16.4px;letter-spacing:0.3px">JP5
JP3
JP2
JP1
<span style="color:#fff">JP7</span>
JP6</div>

<!-- ok / cancel -->
<div class="btn" style="left:566px;top:795px;width:88px;height:28px"></div>
<div class="txt" style="left:601px;top:800px">Ok</div>
<div class="btn" style="left:681px;top:795px;width:89px;height:28px"></div>
<div class="txt" style="left:702px;top:800px;letter-spacing:0.5px">Cancel</div>
<!-- bottom gray strip of workspace -->
<div class="a" style="left:3px;top:829px;width:40px;height:4px;background:#808080"></div>

<!-- outer border -->
<div class="a" style="left:0;top:0;width:864px;height:1px;background:#fff"></div>
<div class="a" style="left:0;top:0;width:2px;height:835px;background:#fff"></div>
<div class="a" style="left:0;top:834px;width:864px;height:1px;background:#fff"></div>
<div class="a" style="left:2px;top:1px;width:862px;height:1px;background:#000"></div>
<div class="a" style="left:2px;top:1px;width:1px;height:833px;background:#000"></div>
<div class="a" style="left:863px;top:1px;width:1px;height:833px;background:#000"></div>
<div class="a" style="left:2px;top:833px;width:862px;height:1px;background:#000"></div>
</body></html>
